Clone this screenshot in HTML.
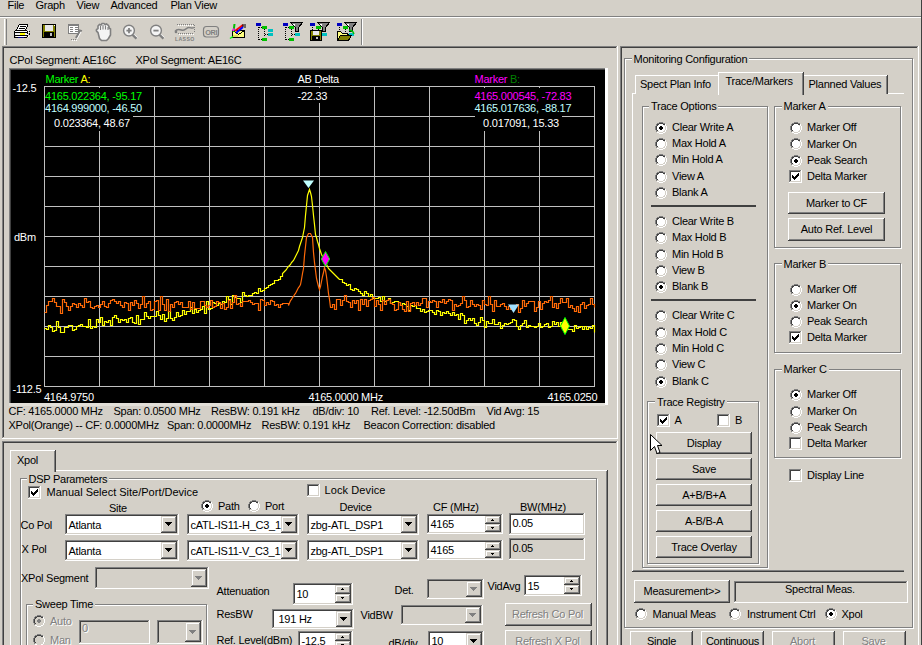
<!DOCTYPE html><html><head><meta charset="utf-8"><style>
html,body{margin:0;padding:0;}
body{width:922px;height:645px;overflow:hidden;position:relative;background:#d4d0c8;font-family:"Liberation Sans",sans-serif;font-size:11px;color:#000;}
.abs{position:absolute;box-sizing:border-box;}
.t{position:absolute;white-space:pre;line-height:13px;letter-spacing:-0.25px;}
.lbl{background:#d4d0c8;}
.btn{box-shadow:inset -1px -1px #404040,inset 1px 1px #fff,inset -2px -2px #808080,inset 2px 2px #d4d0c8;background:#d4d0c8;}
.cbtn{box-shadow:inset -1px -1px #404040,inset 1px 1px #d4d0c8,inset -2px -2px #808080,inset 2px 2px #fff;background:#d4d0c8;}
.sunk{box-shadow:inset -1px -1px #fff,inset 1px 1px #808080,inset -2px -2px #d4d0c8,inset 2px 2px #404040;}
.grp{border:1px solid #808080;box-shadow:1px 1px 0 #fff, inset 1px 1px 0 #fff;}
.g{color:#00ff00}.y{color:#ffff00}.c{color:#c0ffff}.m{color:#ff00ff}.w{color:#fff}.dg{color:#008000}
</style></head><body>
<div class="t " style="left:7.5px;top:-1.1px;">File</div>
<div class="t " style="left:35.5px;top:-1.1px;">Graph</div>
<div class="t " style="left:76.5px;top:-1.1px;">View</div>
<div class="t " style="left:110.5px;top:-1.1px;">Advanced</div>
<div class="t " style="left:170.5px;top:-1.1px;">Plan View</div>
<div class="abs" style="left:0px;top:16px;width:922px;height:1px;background:#808080"></div>
<div class="abs" style="left:0px;top:17px;width:922px;height:1px;background:#fff"></div>
<svg class="abs" style="left:0;top:0" width="400" height="46" shape-rendering="crispEdges"><rect x="19" y="24" width="9" height="1" fill="#000"/><rect x="18" y="25" width="1" height="2" fill="#000"/><rect x="27" y="25" width="1" height="2" fill="#000"/><rect x="19" y="25" width="8" height="2" fill="#fff"/><rect x="17" y="27" width="1" height="2" fill="#000"/><rect x="26" y="27" width="1" height="2" fill="#000"/><rect x="18" y="27" width="8" height="2" fill="#fff"/><rect x="20" y="26" width="6" height="1" fill="#000"/><rect x="19" y="28" width="6" height="1" fill="#000"/><rect x="16" y="29" width="1" height="1" fill="#000"/><rect x="17" y="29" width="9" height="1" fill="#fff"/><rect x="25" y="29" width="1" height="1" fill="#000"/><rect x="15" y="30" width="12" height="1" fill="#000"/><rect x="14" y="31" width="1" height="7" fill="#000"/><rect x="27" y="31" width="1" height="6" fill="#000"/><rect x="15" y="31" width="12" height="1" fill="#fff"/><rect x="15" y="32" width="12" height="1" fill="#000"/><rect x="15" y="33" width="12" height="2" fill="#f0f0f0"/><rect x="20" y="33" width="5" height="2" fill="#ffff00"/><rect x="15" y="35" width="12" height="1" fill="#000"/><rect x="16" y="36" width="10" height="1" fill="#fff"/><rect x="15" y="37" width="12" height="1" fill="#000"/><rect x="18" y="37" width="6" height="1" fill="#000080"/><rect x="28" y="30" width="1" height="1" fill="#fff"/><rect x="28" y="32" width="1" height="1" fill="#fff"/><rect x="27" y="34" width="1" height="1" fill="#fff"/><rect x="28" y="36" width="1" height="1" fill="#fff"/><rect x="29" y="31" width="1" height="1" fill="#000"/><rect x="29" y="33" width="1" height="2" fill="#000"/><rect x="42" y="24" width="14" height="14" fill="#000"/><rect x="43" y="25" width="12" height="12" fill="#808000"/><rect x="45" y="25" width="8" height="6" fill="#e8e8e8"/><rect x="44" y="32" width="10" height="5" fill="#000"/><rect x="50" y="33" width="2" height="3" fill="#c0c0c0"/><rect x="54" y="25" width="1" height="1" fill="#fff"/><path d="M68.5 24.5h10v9h-10z" fill="#fff" stroke="#808080" stroke-width="1" /><rect x="68" y="24" width="11" height="2" fill="#808080"/><rect x="70" y="27" width="3" height="1" fill="#808080"/><rect x="75" y="27" width="3" height="1" fill="#808080"/><rect x="70" y="29" width="3" height="1" fill="#808080"/><rect x="75" y="29" width="3" height="1" fill="#808080"/><rect x="70" y="31" width="3" height="1" fill="#808080"/><rect x="75" y="31" width="3" height="1" fill="#808080"/><g shape-rendering="auto"><path d="M80 31l-4 7" fill="none" stroke="#808080" stroke-width="2.2" /><path d="M81 32l-4 7" fill="none" stroke="#fff" stroke-width="1" /><path d="M79 30l3 1" fill="none" stroke="#808080" stroke-width="1.5" /></g><rect x="71" y="39" width="1" height="1" fill="#808080"/><rect x="73" y="39" width="1" height="1" fill="#808080"/><rect x="75" y="39" width="1" height="1" fill="#808080"/><rect x="72" y="40" width="1" height="1" fill="#fff"/><rect x="74" y="40" width="1" height="1" fill="#fff"/><rect x="76" y="40" width="1" height="1" fill="#fff"/><g shape-rendering="auto"><path d="M98 32.5c-1.5 -1 -2 -2 -1.5 -3l1.5 -1v-2.5l1.5 -1.5l1.5 0.5l1 -1.5h2l1 1l1.5 -0.5l1.5 1l1 1.5v1.5l1.5 1v6l-2 3.5l-2 2h-5l-2 -2z" fill="#f4f4f4" stroke="#808080" stroke-width="1.6" /><path d="M100.5 26v4M103 25v4.5M105.5 25.5v4M108 27v3" fill="none" stroke="#808080" stroke-width="1.1" /></g><g shape-rendering="auto"><circle cx="129" cy="30.6" r="5.4" fill="#f4f4f4" stroke="#808080" stroke-width="1.4"/><path d="M132.6 34.4l4 4" stroke="#808080" stroke-width="2.8"/><path d="M134 34.2l3.5 3.5" stroke="#fff" stroke-width="1"/><path d="M126.4 30.6h5.2" stroke="#808080" stroke-width="1.8"/><path d="M129 28v5.2" stroke="#808080" stroke-width="1.8"/><circle cx="156" cy="30.6" r="5.4" fill="#f4f4f4" stroke="#808080" stroke-width="1.4"/><path d="M159.6 34.4l4 4" stroke="#808080" stroke-width="2.8"/><path d="M161 34.2l3.5 3.5" stroke="#fff" stroke-width="1"/><path d="M153.4 30.6h5.2" stroke="#808080" stroke-width="1.8"/></g><rect x="177" y="24" width="1" height="1" fill="#808080"/><rect x="178" y="25" width="1" height="1" fill="#fff"/><rect x="179" y="24" width="1" height="1" fill="#808080"/><rect x="180" y="25" width="1" height="1" fill="#fff"/><rect x="181" y="24" width="1" height="1" fill="#808080"/><rect x="182" y="25" width="1" height="1" fill="#fff"/><rect x="183" y="24" width="1" height="1" fill="#808080"/><rect x="184" y="25" width="1" height="1" fill="#fff"/><rect x="185" y="24" width="1" height="1" fill="#808080"/><rect x="186" y="25" width="1" height="1" fill="#fff"/><rect x="187" y="24" width="1" height="1" fill="#808080"/><rect x="188" y="25" width="1" height="1" fill="#fff"/><rect x="189" y="24" width="1" height="1" fill="#808080"/><rect x="190" y="25" width="1" height="1" fill="#fff"/><rect x="191" y="24" width="1" height="1" fill="#808080"/><rect x="192" y="25" width="1" height="1" fill="#fff"/><rect x="193" y="24" width="1" height="1" fill="#808080"/><rect x="194" y="25" width="1" height="1" fill="#fff"/><rect x="194" y="25" width="1" height="1" fill="#808080"/><rect x="194" y="27" width="1" height="1" fill="#808080"/><rect x="194" y="29" width="1" height="1" fill="#808080"/><rect x="194" y="31" width="1" height="1" fill="#808080"/><rect x="178" y="33" width="1" height="1" fill="#808080"/><rect x="179" y="34" width="1" height="1" fill="#fff"/><rect x="180" y="33" width="1" height="1" fill="#808080"/><rect x="181" y="34" width="1" height="1" fill="#fff"/><rect x="182" y="33" width="1" height="1" fill="#808080"/><rect x="183" y="34" width="1" height="1" fill="#fff"/><rect x="184" y="33" width="1" height="1" fill="#808080"/><rect x="185" y="34" width="1" height="1" fill="#fff"/><rect x="186" y="33" width="1" height="1" fill="#808080"/><rect x="187" y="34" width="1" height="1" fill="#fff"/><rect x="188" y="33" width="1" height="1" fill="#808080"/><rect x="189" y="34" width="1" height="1" fill="#fff"/><rect x="190" y="33" width="1" height="1" fill="#808080"/><rect x="191" y="34" width="1" height="1" fill="#fff"/><rect x="192" y="33" width="1" height="1" fill="#808080"/><rect x="193" y="34" width="1" height="1" fill="#fff"/><g shape-rendering="auto"><path d="M175 31.5c2 -3 4 -2.5 6.5 -1.5c3 1.2 5 -2.5 7.5 -2.5c2 0 3 1.5 5 0" stroke="#808080" stroke-width="1.5" fill="none"/><circle cx="176" cy="32" r="1.3" fill="#808080"/><text x="175" y="40.5" font-family="Liberation Sans" font-size="5.2" font-weight="bold" fill="#808080" letter-spacing="0.35">LASSO</text><rect x="203.5" y="26.5" width="15" height="10.5" rx="3" fill="none" stroke="#808080" stroke-width="1.2"/><text x="205.2" y="34.6" font-family="Liberation Sans" font-size="7" font-weight="bold" fill="#808080" letter-spacing="-0.3" textLength="12" lengthAdjust="spacingAndGlyphs">ORI</text></g><path d="M232.5 30.5h12v7h-12z" fill="#ffff80" stroke="#000" stroke-width="1" /><path d="M232.5 30.5l6 4l6 -4" fill="none" stroke="#000" stroke-width="1" /><rect x="233" y="35" width="5" height="2" fill="#e0e060"/><g shape-rendering="auto"><path d="M235 31l8 -6" fill="none" stroke="#ff0000" stroke-width="2" /><path d="M236 33l7 -6" fill="none" stroke="#0000ff" stroke-width="2" /><path d="M233.5 32l1 -8" fill="none" stroke="#00c000" stroke-width="2" /><path d="M233 31l1 -2.5" fill="none" stroke="#ff00ff" stroke-width="2" /><path d="M243 24v3M245 24v4" fill="none" stroke="#000" stroke-width="1" /><path d="M230 38.5l3 -2" fill="none" stroke="#00ff00" stroke-width="1.5" /></g><rect x="256" y="23" width="5" height="3" fill="#0000c0"/><rect x="258" y="27" width="1" height="1" fill="#000"/><rect x="258" y="29" width="1" height="1" fill="#000"/><rect x="258" y="31" width="1" height="1" fill="#000"/><rect x="258" y="33" width="1" height="1" fill="#000"/><rect x="258" y="35" width="1" height="1" fill="#000"/><rect x="258" y="37" width="1" height="1" fill="#000"/><rect x="258" y="39" width="1" height="1" fill="#000"/><rect x="259" y="27" width="1" height="1" fill="#000"/><rect x="261" y="27" width="1" height="1" fill="#000"/><rect x="259" y="39" width="1" height="1" fill="#000"/><rect x="261" y="39" width="1" height="1" fill="#000"/><rect x="262" y="26" width="5" height="3" fill="#00c000"/><rect x="262" y="38" width="5" height="3" fill="#00c000"/><rect x="264" y="29" width="1" height="1" fill="#000"/><rect x="264" y="31" width="1" height="1" fill="#000"/><rect x="264" y="33" width="1" height="1" fill="#000"/><rect x="264" y="35" width="1" height="1" fill="#000"/><rect x="268" y="29" width="5" height="3" fill="#00c0c0"/><rect x="268" y="33" width="5" height="3" fill="#00c0c0"/><rect x="265" y="34" width="1" height="1" fill="#000"/><rect x="267" y="34" width="1" height="1" fill="#000"/><rect x="283" y="23" width="5" height="3" fill="#0000c0"/><rect x="285" y="27" width="1" height="1" fill="#000"/><rect x="285" y="29" width="1" height="1" fill="#000"/><rect x="285" y="31" width="1" height="1" fill="#000"/><rect x="285" y="33" width="1" height="1" fill="#000"/><rect x="285" y="35" width="1" height="1" fill="#000"/><rect x="285" y="37" width="1" height="1" fill="#000"/><rect x="285" y="39" width="1" height="1" fill="#000"/><rect x="286" y="27" width="1" height="1" fill="#000"/><rect x="288" y="27" width="1" height="1" fill="#000"/><rect x="286" y="39" width="1" height="1" fill="#000"/><rect x="288" y="39" width="1" height="1" fill="#000"/><rect x="289" y="26" width="5" height="3" fill="#00c000"/><rect x="289" y="38" width="5" height="3" fill="#00c000"/><rect x="291" y="29" width="1" height="1" fill="#000"/><rect x="291" y="31" width="1" height="1" fill="#000"/><rect x="291" y="33" width="1" height="1" fill="#000"/><rect x="291" y="35" width="1" height="1" fill="#000"/><rect x="295" y="33" width="5" height="3" fill="#00c0c0"/><rect x="292" y="34" width="1" height="1" fill="#000"/><rect x="294" y="34" width="1" height="1" fill="#000"/><path d="M290.5 22.5h12l-4 5v4h-3v-4z" fill="#808080" stroke="#000" stroke-width="1" /><path d="M292 23.5h4l-1.5 2.5z" fill="#fff" stroke="none" stroke-width="1" /><rect x="310" y="23" width="5" height="3" fill="#0000c0"/><rect x="312" y="27" width="1" height="1" fill="#000"/><rect x="312" y="29" width="1" height="1" fill="#000"/><rect x="312" y="31" width="1" height="1" fill="#000"/><rect x="312" y="33" width="1" height="1" fill="#000"/><rect x="312" y="35" width="1" height="1" fill="#000"/><rect x="312" y="37" width="1" height="1" fill="#000"/><rect x="312" y="39" width="1" height="1" fill="#000"/><rect x="316" y="26" width="5" height="3" fill="#00c000"/><rect x="318" y="29" width="1" height="1" fill="#000"/><rect x="318" y="31" width="1" height="1" fill="#000"/><rect x="318" y="33" width="1" height="1" fill="#000"/><rect x="318" y="35" width="1" height="1" fill="#000"/><rect x="322" y="33" width="5" height="3" fill="#00c0c0"/><rect x="319" y="34" width="1" height="1" fill="#000"/><rect x="321" y="34" width="1" height="1" fill="#000"/><path d="M317.5 22.5h12l-4 5v4h-3v-4z" fill="#808080" stroke="#000" stroke-width="1" /><path d="M319 23.5h4l-1.5 2.5z" fill="#fff" stroke="none" stroke-width="1" /><rect x="310" y="30" width="12" height="11" fill="#000"/><rect x="311" y="31" width="10" height="9" fill="#808000"/><rect x="313" y="31" width="6" height="4" fill="#e8e8e8"/><rect x="312" y="36" width="8" height="4" fill="#000"/><rect x="316" y="37" width="2" height="2" fill="#c0c0c0"/><rect x="337" y="23" width="5" height="3" fill="#0000c0"/><rect x="339" y="27" width="1" height="1" fill="#000"/><rect x="339" y="29" width="1" height="1" fill="#000"/><rect x="339" y="31" width="1" height="1" fill="#000"/><rect x="339" y="33" width="1" height="1" fill="#000"/><rect x="339" y="35" width="1" height="1" fill="#000"/><rect x="339" y="37" width="1" height="1" fill="#000"/><rect x="339" y="39" width="1" height="1" fill="#000"/><rect x="343" y="26" width="5" height="3" fill="#00c000"/><rect x="345" y="29" width="1" height="1" fill="#000"/><rect x="345" y="31" width="1" height="1" fill="#000"/><rect x="345" y="33" width="1" height="1" fill="#000"/><rect x="345" y="35" width="1" height="1" fill="#000"/><rect x="349" y="33" width="5" height="3" fill="#00c0c0"/><rect x="346" y="34" width="1" height="1" fill="#000"/><rect x="348" y="34" width="1" height="1" fill="#000"/><path d="M344.5 22.5h12l-4 5v4h-3v-4z" fill="#808080" stroke="#000" stroke-width="1" /><path d="M346 23.5h4l-1.5 2.5z" fill="#fff" stroke="none" stroke-width="1" /><path d="M337.5 31.5h3l2 2h5v7h-10z" fill="#ffff80" stroke="#000" stroke-width="1" /><path d="M337.5 40.5l3 -5h11l-3 5z" fill="#808000" stroke="#000" stroke-width="1" /><path d="M349 30l3 1l1 1l1 2" stroke="#00c000" stroke-width="1.5" fill="none" shape-rendering="auto"/></svg>
<div class="abs" style="left:4px;top:19px;width:1px;height:26px;background:#fff"></div>
<div class="abs" style="left:6px;top:19px;width:1px;height:26px;background:#808080"></div>
<div class="abs" style="left:361px;top:19px;width:1px;height:26px;background:#808080"></div>
<div class="abs" style="left:362px;top:19px;width:1px;height:26px;background:#fff"></div>
<div class="abs" style="left:0px;top:45px;width:922px;height:1px;background:#d4d0c8"></div>
<div class="abs" style="left:2px;top:46px;width:616px;height:393px;"></div>
<div class="abs" style="left:2px;top:46px;width:616px;height:393px;box-shadow:inset -1px -1px #fff,inset 1px 1px #808080,inset -2px -2px #d4d0c8,inset 2px 2px #404040;"></div>
<div class="t " style="left:9.5px;top:53.7px;">CPol Segment: AE16C</div>
<div class="t " style="left:135.5px;top:53.7px;">XPol Segment: AE16C</div>
<div class="abs" style="left:9px;top:68px;width:599px;height:337px;box-shadow:inset 1px 1px #808080,inset 2px 2px #404040;"></div>
<div class="abs" style="left:605px;top:68px;width:3px;height:337px;background:#fff"></div>
<div class="abs" style="left:9px;top:403px;width:596px;height:3px;background:#e2dfd8"></div>
<div class="abs" style="left:11px;top:70px;width:594px;height:333px;background:#000"></div>
<svg class="abs" style="left:0;top:0" width="922" height="645"><path d="M44.5 86V387M44 86.5H595M99.5 86V387M44 116.5H595M154.5 86V387M44 146.5H595M209.5 86V387M44 176.5H595M264.5 86V387M44 206.5H595M319.5 86V387M44 236.5H595M374.5 86V387M44 266.5H595M429.5 86V387M44 296.5H595M484.5 86V387M44 326.5H595M539.5 86V387M44 356.5H595M594.5 86V387M44 386.5H595" stroke="#c0c0c0" stroke-width="1" fill="none"/><path d="M44.5 328.5H46.5V329.5H48.5V325.5H50.5V327.5H52.5V331.5H54.5V330.5H56.5V321.5H58.5V327.5H60.5V332.5H62.5V332.5H64.5V327.5H66.5V327.5H68.5V325.5H70.5V325.5H72.5V330.5H74.5V329.5H76.5V326.5H78.5V325.5H80.5V324.5H82.5V326.5H84.5V326.5H86.5V327.5H88.5V319.5H90.5V328.5H92.5V326.5H94.5V327.5H96.5V319.5H98.5V322.5H100.5V317.5H102.5V325.5H104.5V321.5H106.5V322.5H108.5V320.5H110.5V325.5H112.5V317.5H114.5V315.5H116.5V318.5H118.5V322.5H120.5V319.5H122.5V320.5H124.5V319.5H126.5V322.5H128.5V318.5H130.5V317.5H132.5V322.5H134.5V323.5H136.5V315.5H138.5V324.5H140.5V319.5H142.5V319.5H144.5V312.5H146.5V316.5H148.5V318.5H150.5V316.5H152.5V316.5H154.5V316.5H156.5V311.5H158.5V315.5H160.5V319.5H162.5V314.5H164.5V321.5H166.5V318.5H168.5V311.5H170.5V318.5H172.5V320.5H174.5V317.5H176.5V312.5H178.5V316.5H180.5V315.5H182.5V310.5H184.5V314.5H186.5V311.5H188.5V311.5H190.5V307.5H192.5V313.5H194.5V309.5H196.5V312.5H198.5V310.5H200.5V309.5H202.5V306.5H204.5V313.5H206.5V301.5H208.5V309.5H210.5V308.5H212.5V302.5H214.5V303.5H216.5V305.5H218.5V303.5H220.5V304.5H222.5V301.5H224.5V302.5H226.5V296.5H228.5V299.5H230.5V304.5H232.5V295.5H234.5V297.5H236.5V298.5H238.5V298.5H240.5V302.5H242.5V292.5H244.5V295.5H246.5V296.5H248.5V295.5H250.5V295.5H252.5V293.5H254.5V292.5H256.5V293.5H258.5V288.5H260.5V291.5H262.5V290.5H264.5V288.5H266.5V287.5H268.5V285.5H270.5V284.5H272.5V283.5H274.5V280.5H276.5V280.5H278.5V279.5H280.5V276.5H282.5V273.5L284.5 271.5L285.5 270.5L286.5 269.5L287.5 267.5L288.5 266.5L289.5 265.5L290.5 264.5L291.5 262.5L292.5 261.5L293.5 260.5L294.5 258.5L295.5 256.5L296.5 254.5L297.5 252.5L298.5 250.5L299.5 246.5L300.5 243.5L301.5 240.5L302.5 237.5L303.5 232.5L304.5 227.5L305.5 215.5L306.5 205.5L307.5 195.5L308.5 192.5L309.5 189.5L310.5 192.5L311.5 196.5L312.5 205.5L313.5 215.5L314.5 224.5L315.5 234.5L316.5 237.5L317.5 241.5L318.5 244.5L319.5 248.5L320.5 251.5L321.5 254.5L322.5 256.5L323.5 258.5L324.5 260.5L325.5 262.5L326.5 264.5L327.5 266.5L328.5 268.5L329.5 269.5L330.5 270.5L331.5 271.5L332.5 272.5L333.5 273.5L334.5 274.5L335.5 275.5L336.5 276.5L337.5 277.5L338.5 278.5L339.5 279.5L340.5 279.5H342.5V282.5H344.5V283.5H346.5V285.5H348.5V284.5H350.5V289.5H352.5V290.5H354.5V288.5H356.5V289.5H358.5V291.5H360.5V293.5H362.5V295.5H364.5V291.5H366.5V293.5H368.5V296.5H370.5V294.5H372.5V298.5H374.5V298.5H376.5V298.5H378.5V297.5H380.5V301.5H382.5V296.5H384.5V301.5H386.5V300.5H388.5V298.5H390.5V303.5H392.5V302.5H394.5V301.5H396.5V301.5H398.5V302.5H400.5V305.5H402.5V303.5H404.5V304.5H406.5V306.5H408.5V310.5H410.5V305.5H412.5V306.5H414.5V305.5H416.5V308.5H418.5V308.5H420.5V311.5H422.5V309.5H424.5V312.5H426.5V311.5H428.5V310.5H430.5V310.5H432.5V312.5H434.5V314.5H436.5V310.5H438.5V311.5H440.5V315.5H442.5V312.5H444.5V313.5H446.5V311.5H448.5V313.5H450.5V315.5H452.5V312.5H454.5V315.5H456.5V314.5H458.5V319.5H460.5V313.5H462.5V315.5H464.5V323.5H466.5V320.5H468.5V318.5H470.5V320.5H472.5V318.5H474.5V323.5H476.5V325.5H478.5V322.5H480.5V317.5H482.5V320.5H484.5V327.5H486.5V321.5H488.5V323.5H490.5V323.5H492.5V319.5H494.5V324.5H496.5V324.5H498.5V322.5H500.5V328.5H502.5V325.5H504.5V323.5H506.5V324.5H508.5V323.5H510.5V322.5H512.5V319.5H514.5V320.5H516.5V326.5H518.5V329.5H520.5V325.5H522.5V323.5H524.5V320.5H526.5V327.5H528.5V325.5H530.5V326.5H532.5V326.5H534.5V327.5H536.5V326.5H538.5V323.5H540.5V327.5H542.5V326.5H544.5V324.5H546.5V323.5H548.5V327.5H550.5V326.5H552.5V321.5H554.5V324.5H556.5V322.5H558.5V326.5H560.5V322.5H562.5V329.5H564.5V328.5H566.5V329.5H568.5V329.5H570.5V329.5H572.5V331.5H574.5V325.5H576.5V328.5H578.5V327.5H580.5V326.5H582.5V329.5H584.5V326.5H586.5V329.5H588.5V327.5H590.5V328.5H592.5V325.5H594.5V332.5" stroke="#ffff00" stroke-width="1.2" fill="none"/><path d="M44.5 312.5H46.5V305.5H48.5V301.5H50.5V301.5H52.5V298.5H54.5V302.5H56.5V306.5H58.5V306.5H60.5V313.5H62.5V299.5H64.5V302.5H66.5V306.5H68.5V310.5H70.5V306.5H72.5V303.5H74.5V304.5H76.5V307.5H78.5V303.5H80.5V305.5H82.5V307.5H84.5V298.5H86.5V302.5H88.5V301.5H90.5V307.5H92.5V308.5H94.5V306.5H96.5V305.5H98.5V307.5H100.5V304.5H102.5V301.5H104.5V306.5H106.5V307.5H108.5V303.5H110.5V300.5H112.5V299.5H114.5V301.5H116.5V303.5H118.5V301.5H120.5V305.5H122.5V307.5H124.5V302.5H126.5V303.5H128.5V310.5H130.5V302.5H132.5V305.5H134.5V300.5H136.5V303.5H138.5V308.5H140.5V304.5H142.5V296.5H144.5V307.5H146.5V303.5H148.5V301.5H150.5V310.5H152.5V309.5H154.5V301.5H156.5V300.5H158.5V310.5H160.5V296.5H162.5V304.5H164.5V310.5H166.5V299.5H168.5V311.5H170.5V304.5H172.5V307.5H174.5V302.5H176.5V301.5H178.5V304.5H180.5V302.5H182.5V307.5H184.5V307.5H186.5V307.5H188.5V301.5H190.5V309.5H192.5V302.5H194.5V308.5H196.5V308.5H198.5V308.5H200.5V301.5H202.5V301.5H204.5V305.5H206.5V307.5H208.5V305.5H210.5V300.5H212.5V307.5H214.5V306.5H216.5V301.5H218.5V302.5H220.5V308.5H222.5V303.5H224.5V309.5H226.5V307.5H228.5V300.5H230.5V308.5H232.5V302.5H234.5V295.5H236.5V304.5H238.5V303.5H240.5V306.5H242.5V301.5H244.5V301.5H246.5V301.5H248.5V300.5H250.5V302.5H252.5V304.5H254.5V303.5H256.5V303.5H258.5V310.5H260.5V299.5H262.5V300.5H264.5V305.5H266.5V302.5H268.5V304.5H270.5V300.5H272.5V301.5H274.5V305.5H276.5V304.5H278.5V307.5H280.5V304.5H282.5V303.5H284.5V303.5H286.5V303.5H288.5V305.5L290.5 300.5L291.5 299.5L292.5 297.5L293.5 296.5L294.5 294.5L295.5 293.5L296.5 291.5L297.5 289.5L298.5 287.5L299.5 286.5L300.5 284.5L301.5 279.5L302.5 273.5L303.5 268.5L304.5 255.5L305.5 246.5L306.5 237.5L307.5 235.5L308.5 233.5L309.5 233.5L310.5 233.5L311.5 235.5L312.5 237.5L313.5 252.5L314.5 262.5L315.5 270.5L316.5 278.5L317.5 282.5L318.5 286.5L319.5 289.5L320.5 286.5L321.5 281.5L322.5 276.5L323.5 272.5L324.5 267.5L325.5 270.5L326.5 276.5L327.5 284.5L328.5 293.5L329.5 299.5L330.5 307.5H332.5V304.5H334.5V309.5H336.5V299.5H338.5V299.5H340.5V305.5H342.5V300.5H344.5V295.5H346.5V301.5H348.5V302.5H350.5V307.5H352.5V300.5H354.5V303.5H356.5V300.5H358.5V310.5H360.5V299.5H362.5V304.5H364.5V299.5H366.5V306.5H368.5V300.5H370.5V299.5H372.5V297.5H374.5V306.5H376.5V300.5H378.5V304.5H380.5V310.5H382.5V300.5H384.5V304.5H386.5V300.5H388.5V299.5H390.5V303.5H392.5V304.5H394.5V310.5H396.5V309.5H398.5V302.5H400.5V305.5H402.5V309.5H404.5V311.5H406.5V301.5H408.5V311.5H410.5V303.5H412.5V302.5H414.5V305.5H416.5V302.5H418.5V305.5H420.5V303.5H422.5V298.5H424.5V298.5H426.5V307.5H428.5V301.5H430.5V302.5H432.5V300.5H434.5V301.5H436.5V307.5H438.5V301.5H440.5V302.5H442.5V299.5H444.5V303.5H446.5V301.5H448.5V299.5H450.5V300.5H452.5V310.5H454.5V304.5H456.5V306.5H458.5V305.5H460.5V303.5H462.5V296.5H464.5V300.5H466.5V307.5H468.5V306.5H470.5V300.5H472.5V304.5H474.5V306.5H476.5V304.5H478.5V305.5H480.5V309.5H482.5V300.5H484.5V304.5H486.5V305.5H488.5V296.5H490.5V304.5H492.5V311.5H494.5V300.5H496.5V306.5H498.5V306.5H500.5V304.5H502.5V303.5H504.5V306.5H506.5V309.5H508.5V306.5H510.5V309.5H512.5V305.5H514.5V305.5H516.5V304.5H518.5V312.5H520.5V308.5H522.5V300.5H524.5V306.5H526.5V303.5H528.5V301.5H530.5V301.5H532.5V301.5H534.5V311.5H536.5V307.5H538.5V301.5H540.5V309.5H542.5V303.5H544.5V301.5H546.5V302.5H548.5V300.5H550.5V296.5H552.5V307.5H554.5V303.5H556.5V308.5H558.5V303.5H560.5V298.5H562.5V302.5H564.5V302.5H566.5V298.5H568.5V307.5H570.5V305.5H572.5V308.5H574.5V311.5H576.5V306.5H578.5V312.5H580.5V304.5H582.5V302.5H584.5V308.5H586.5V305.5H588.5V304.5H590.5V298.5H592.5V304.5H594.5V307.5" stroke="#ff6a08" stroke-width="1.2" fill="none"/><rect x="45" y="88" width="100" height="14" fill="#000"/><rect x="45" y="102" width="100" height="14" fill="#000"/><rect x="45" y="116" width="88" height="15" fill="#000"/><rect x="296" y="88" width="34" height="15" fill="#000"/><rect x="475" y="88" width="100" height="14" fill="#000"/><rect x="475" y="102" width="100" height="14" fill="#000"/><rect x="475" y="116" width="87" height="15" fill="#000"/><path d="M303 180.5h11l-5.5 7.5z" fill="#c0ffff"/><path d="M508 304.5h11l-5.5 8.5z" fill="#a0e0ff"/><path d="M325.5 251.5l4.2 7.5l-4.2 7.5l-4.2 -7.5z" fill="#ff00ff" stroke="#00ff00" stroke-width="1"/><path d="M565 317.5l4.5 8.5l-4.5 8.5l-4.5 -8.5z" fill="#ffff00" stroke="#00ff00" stroke-width="1"/></svg><div class="t w" style="left:12.5px;top:82.2px;">-12.5</div><div class="t w" style="left:14.0px;top:231.4px;">dBm</div><div class="t w" style="left:12.5px;top:382.7px;">-112.5</div><div class="t w" style="left:44.0px;top:391.2px;">4164.9750</div><div class="t w" style="left:308.5px;top:391.2px;">4165.0000 MHz</div><div class="t w" style="left:547.5px;top:391.2px;">4165.0250</div><div class="t " style="left:45.5px;top:73.2px;"><span class="g">Marker </span><span class="y">A:</span></div><div class="t g" style="left:45.1px;top:89.7px;">4165.022364, -95.17</div><div class="t c" style="left:45.1px;top:102.2px;">4164.999000, -46.50</div><div class="t w" style="left:54.1px;top:117.2px;">0.023364, 48.67</div><div class="t w" style="left:297.5px;top:73.2px;">AB Delta</div><div class="t w" style="left:297.5px;top:90.2px;">-22.33</div><div class="t " style="left:474.5px;top:73.2px;"><span class="m">Marker </span><span class="dg">B:</span></div><div class="t m" style="left:474.5px;top:89.7px;">4165.000545, -72.83</div><div class="t c" style="left:474.5px;top:102.2px;">4165.017636, -88.17</div><div class="t w" style="left:483.1px;top:117.2px;">0.017091, 15.33</div>
<div class="t " style="left:8.5px;top:404.7px;">CF: 4165.0000 MHz</div>
<div class="t " style="left:113.5px;top:404.7px;">Span: 0.0500 MHz</div>
<div class="t " style="left:211.0px;top:404.7px;">ResBW: 0.191 kHz</div>
<div class="t " style="left:312.5px;top:404.7px;">dB/div: 10</div>
<div class="t " style="left:371.0px;top:404.7px;">Ref. Level: -12.50dBm</div>
<div class="t " style="left:486.5px;top:404.7px;">Vid Avg: 15</div>
<div class="t " style="left:8.5px;top:418.7px;">XPol(Orange) -- CF: 0.0000MHz</div>
<div class="t " style="left:167.0px;top:418.7px;">Span: 0.0000MHz</div>
<div class="t " style="left:261.5px;top:418.7px;">ResBW: 0.191 kHz</div>
<div class="t " style="left:363.5px;top:418.7px;">Beacon Correction: disabled</div>
<div class="abs" style="left:2px;top:441px;width:616px;height:220px;box-shadow:inset -1px -1px #fff,inset 1px 1px #808080,inset -2px -2px #d4d0c8,inset 2px 2px #404040;"></div>
<div class="abs" style="left:10px;top:470px;width:598px;height:200px;box-shadow:inset -1px -1px #404040,inset 1px 1px #fff,inset -2px -2px #808080;"></div>
<div class="abs" style="left:10px;top:450px;width:46px;height:22px;background:#d4d0c8;box-shadow:inset -1px 0 #404040,inset 1px 1px #fff,inset -2px 0 #808080;"></div>
<div class="t " style="left:17.0px;top:453.7px;">Xpol</div>
<div class="abs grp" style="left:20px;top:478px;width:577px;height:200px;"></div>
<div class="t lbl" style="left:26.5px;top:472.7px;padding:0 2px">DSP Parameters</div>
<svg class="abs" style="left:28px;top:486px" width="13" height="13" shape-rendering="crispEdges"><rect x="0" y="0" width="13" height="13" fill="#fff"/><rect x="0" y="0" width="12" height="1" fill="#808080"/><rect x="0" y="0" width="1" height="12" fill="#808080"/><rect x="1" y="1" width="10" height="1" fill="#404040"/><rect x="1" y="1" width="1" height="10" fill="#404040"/><rect x="1" y="11" width="11" height="1" fill="#d4d0c8"/><rect x="11" y="1" width="1" height="11" fill="#d4d0c8"/><rect x="0" y="12" width="13" height="1" fill="#fff"/><rect x="12" y="0" width="1" height="13" fill="#fff"/><rect x="9" y="3" width="1" height="1" fill="#000"/><rect x="8" y="4" width="1" height="1" fill="#000"/><rect x="9" y="4" width="1" height="1" fill="#000"/><rect x="7" y="5" width="1" height="1" fill="#000"/><rect x="8" y="5" width="1" height="1" fill="#000"/><rect x="9" y="5" width="1" height="1" fill="#000"/><rect x="3" y="5" width="1" height="1" fill="#000"/><rect x="3" y="6" width="1" height="1" fill="#000"/><rect x="4" y="6" width="1" height="1" fill="#000"/><rect x="6" y="6" width="1" height="1" fill="#000"/><rect x="7" y="6" width="1" height="1" fill="#000"/><rect x="8" y="6" width="1" height="1" fill="#000"/><rect x="3" y="7" width="1" height="1" fill="#000"/><rect x="4" y="7" width="1" height="1" fill="#000"/><rect x="5" y="7" width="1" height="1" fill="#000"/><rect x="6" y="7" width="1" height="1" fill="#000"/><rect x="7" y="7" width="1" height="1" fill="#000"/><rect x="4" y="8" width="1" height="1" fill="#000"/><rect x="5" y="8" width="1" height="1" fill="#000"/><rect x="6" y="8" width="1" height="1" fill="#000"/><rect x="5" y="9" width="1" height="1" fill="#000"/></svg>
<div class="t " style="left:46.5px;top:485.7px;letter-spacing:0">Manual Select Site/Port/Device</div>
<svg class="abs" style="left:307px;top:484px" width="13" height="13" shape-rendering="crispEdges"><rect x="0" y="0" width="13" height="13" fill="#fff"/><rect x="0" y="0" width="12" height="1" fill="#808080"/><rect x="0" y="0" width="1" height="12" fill="#808080"/><rect x="1" y="1" width="10" height="1" fill="#404040"/><rect x="1" y="1" width="1" height="10" fill="#404040"/><rect x="1" y="11" width="11" height="1" fill="#d4d0c8"/><rect x="11" y="1" width="1" height="11" fill="#d4d0c8"/><rect x="0" y="12" width="13" height="1" fill="#fff"/><rect x="12" y="0" width="1" height="13" fill="#fff"/></svg>
<div class="t " style="left:324.5px;top:483.7px;letter-spacing:0.1px">Lock Device</div>
<div class="t " style="left:109.0px;top:501.7px;">Site</div>
<svg class="abs" style="left:201px;top:500px" width="12" height="12" shape-rendering="crispEdges"><rect x="3" y="2" width="6" height="8" fill="#fff"/><rect x="2" y="3" width="8" height="6" fill="#fff"/><rect x="4" y="0" width="4" height="1" fill="#808080"/><rect x="2" y="1" width="2" height="1" fill="#808080"/><rect x="8" y="1" width="2" height="1" fill="#808080"/><rect x="1" y="2" width="1" height="2" fill="#808080"/><rect x="0" y="4" width="1" height="4" fill="#808080"/><rect x="1" y="8" width="1" height="2" fill="#808080"/><rect x="4" y="1" width="4" height="1" fill="#404040"/><rect x="2" y="2" width="2" height="1" fill="#404040"/><rect x="8" y="2" width="2" height="1" fill="#404040"/><rect x="2" y="3" width="1" height="1" fill="#404040"/><rect x="1" y="4" width="1" height="4" fill="#404040"/><rect x="2" y="8" width="1" height="1" fill="#404040"/><rect x="4" y="11" width="4" height="1" fill="#fff"/><rect x="2" y="10" width="2" height="1" fill="#fff"/><rect x="8" y="10" width="2" height="1" fill="#fff"/><rect x="10" y="8" width="1" height="2" fill="#fff"/><rect x="11" y="4" width="1" height="4" fill="#fff"/><rect x="10" y="2" width="1" height="2" fill="#fff"/><rect x="4" y="10" width="4" height="1" fill="#d4d0c8"/><rect x="2" y="9" width="2" height="1" fill="#d4d0c8"/><rect x="8" y="9" width="2" height="1" fill="#d4d0c8"/><rect x="9" y="8" width="1" height="1" fill="#d4d0c8"/><rect x="10" y="4" width="1" height="4" fill="#d4d0c8"/><rect x="9" y="3" width="1" height="1" fill="#d4d0c8"/><rect x="5" y="4" width="2" height="1" fill="#000"/><rect x="4" y="5" width="4" height="2" fill="#000"/><rect x="5" y="7" width="2" height="1" fill="#000"/></svg>
<div class="t " style="left:218.0px;top:499.7px;">Path</div>
<svg class="abs" style="left:248px;top:500px" width="12" height="12" shape-rendering="crispEdges"><rect x="3" y="2" width="6" height="8" fill="#fff"/><rect x="2" y="3" width="8" height="6" fill="#fff"/><rect x="4" y="0" width="4" height="1" fill="#808080"/><rect x="2" y="1" width="2" height="1" fill="#808080"/><rect x="8" y="1" width="2" height="1" fill="#808080"/><rect x="1" y="2" width="1" height="2" fill="#808080"/><rect x="0" y="4" width="1" height="4" fill="#808080"/><rect x="1" y="8" width="1" height="2" fill="#808080"/><rect x="4" y="1" width="4" height="1" fill="#404040"/><rect x="2" y="2" width="2" height="1" fill="#404040"/><rect x="8" y="2" width="2" height="1" fill="#404040"/><rect x="2" y="3" width="1" height="1" fill="#404040"/><rect x="1" y="4" width="1" height="4" fill="#404040"/><rect x="2" y="8" width="1" height="1" fill="#404040"/><rect x="4" y="11" width="4" height="1" fill="#fff"/><rect x="2" y="10" width="2" height="1" fill="#fff"/><rect x="8" y="10" width="2" height="1" fill="#fff"/><rect x="10" y="8" width="1" height="2" fill="#fff"/><rect x="11" y="4" width="1" height="4" fill="#fff"/><rect x="10" y="2" width="1" height="2" fill="#fff"/><rect x="4" y="10" width="4" height="1" fill="#d4d0c8"/><rect x="2" y="9" width="2" height="1" fill="#d4d0c8"/><rect x="8" y="9" width="2" height="1" fill="#d4d0c8"/><rect x="9" y="8" width="1" height="1" fill="#d4d0c8"/><rect x="10" y="4" width="1" height="4" fill="#d4d0c8"/><rect x="9" y="3" width="1" height="1" fill="#d4d0c8"/></svg>
<div class="t " style="left:265.0px;top:499.7px;">Port</div>
<div class="t " style="left:339.5px;top:500.7px;">Device</div>
<div class="t " style="left:433.0px;top:500.7px;">CF (MHz)</div>
<div class="t " style="left:520.0px;top:500.7px;">BW(MHz)</div>
<div class="t " style="left:20.5px;top:518.7px;">Co Pol</div>
<div class="t " style="left:21.5px;top:543.2px;">X Pol</div>
<div class="abs sunk" style="left:65px;top:514px;width:114px;height:21px;background:#fff"></div>
<div class="abs cbtn" style="left:161px;top:516px;width:16px;height:17px;"></div>
<svg class="abs" style="left:161px;top:516px" width="16" height="17" shape-rendering="crispEdges"><rect x="4" y="6" width="7" height="1" fill="#000"/><rect x="5" y="7" width="5" height="1" fill="#000"/><rect x="6" y="8" width="3" height="1" fill="#000"/><rect x="7" y="9" width="1" height="1" fill="#000"/></svg>
<div class="t " style="left:68.5px;top:518.7px;">Atlanta</div>
<div class="abs sunk" style="left:65px;top:540px;width:114px;height:21px;background:#fff"></div>
<div class="abs cbtn" style="left:161px;top:542px;width:16px;height:17px;"></div>
<svg class="abs" style="left:161px;top:542px" width="16" height="17" shape-rendering="crispEdges"><rect x="4" y="6" width="7" height="1" fill="#000"/><rect x="5" y="7" width="5" height="1" fill="#000"/><rect x="6" y="8" width="3" height="1" fill="#000"/><rect x="7" y="9" width="1" height="1" fill="#000"/></svg>
<div class="t " style="left:68.5px;top:544.7px;">Atlanta</div>
<div class="abs sunk" style="left:187px;top:514px;width:112px;height:21px;background:#fff"></div>
<div class="abs cbtn" style="left:281px;top:516px;width:16px;height:17px;"></div>
<svg class="abs" style="left:281px;top:516px" width="16" height="17" shape-rendering="crispEdges"><rect x="4" y="6" width="7" height="1" fill="#000"/><rect x="5" y="7" width="5" height="1" fill="#000"/><rect x="6" y="8" width="3" height="1" fill="#000"/><rect x="7" y="9" width="1" height="1" fill="#000"/></svg>
<div class="t " style="left:190.5px;top:518.7px;">cATL-IS11-H_C3_1</div>
<div class="abs sunk" style="left:187px;top:540px;width:112px;height:21px;background:#fff"></div>
<div class="abs cbtn" style="left:281px;top:542px;width:16px;height:17px;"></div>
<svg class="abs" style="left:281px;top:542px" width="16" height="17" shape-rendering="crispEdges"><rect x="4" y="6" width="7" height="1" fill="#000"/><rect x="5" y="7" width="5" height="1" fill="#000"/><rect x="6" y="8" width="3" height="1" fill="#000"/><rect x="7" y="9" width="1" height="1" fill="#000"/></svg>
<div class="t " style="left:190.5px;top:544.7px;">cATL-IS11-V_C3_1</div>
<div class="abs sunk" style="left:307px;top:514px;width:112px;height:21px;background:#fff"></div>
<div class="abs cbtn" style="left:401px;top:516px;width:16px;height:17px;"></div>
<svg class="abs" style="left:401px;top:516px" width="16" height="17" shape-rendering="crispEdges"><rect x="4" y="6" width="7" height="1" fill="#000"/><rect x="5" y="7" width="5" height="1" fill="#000"/><rect x="6" y="8" width="3" height="1" fill="#000"/><rect x="7" y="9" width="1" height="1" fill="#000"/></svg>
<div class="t " style="left:310.5px;top:518.7px;">zbg-ATL_DSP1</div>
<div class="abs sunk" style="left:307px;top:540px;width:112px;height:21px;background:#fff"></div>
<div class="abs cbtn" style="left:401px;top:542px;width:16px;height:17px;"></div>
<svg class="abs" style="left:401px;top:542px" width="16" height="17" shape-rendering="crispEdges"><rect x="4" y="6" width="7" height="1" fill="#000"/><rect x="5" y="7" width="5" height="1" fill="#000"/><rect x="6" y="8" width="3" height="1" fill="#000"/><rect x="7" y="9" width="1" height="1" fill="#000"/></svg>
<div class="t " style="left:310.5px;top:544.7px;">zbg-ATL_DSP1</div>
<div class="abs sunk" style="left:427px;top:514px;width:76px;height:20px;background:#fff"></div>
<div class="abs cbtn" style="left:485px;top:516px;width:16px;height:8px;"></div>
<div class="abs cbtn" style="left:485px;top:524px;width:16px;height:8px;"></div>
<svg class="abs" style="left:485px;top:516px" width="16" height="16" shape-rendering="crispEdges"><rect x="7" y="3" width="1" height="1" fill="#000"/><rect x="6" y="4" width="3" height="1" fill="#000"/><rect x="6" y="11" width="3" height="1" fill="#000"/><rect x="7" y="12" width="1" height="1" fill="#000"/></svg>
<div class="t " style="left:430.5px;top:518.2px;">4165</div>
<div class="abs sunk" style="left:427px;top:540px;width:76px;height:20px;background:#fff"></div>
<div class="abs cbtn" style="left:485px;top:542px;width:16px;height:8px;"></div>
<div class="abs cbtn" style="left:485px;top:550px;width:16px;height:8px;"></div>
<svg class="abs" style="left:485px;top:542px" width="16" height="16" shape-rendering="crispEdges"><rect x="7" y="3" width="1" height="1" fill="#000"/><rect x="6" y="4" width="3" height="1" fill="#000"/><rect x="6" y="11" width="3" height="1" fill="#000"/><rect x="7" y="12" width="1" height="1" fill="#000"/></svg>
<div class="t " style="left:430.5px;top:544.2px;">4165</div>
<div class="abs sunk" style="left:509px;top:513px;width:76px;height:22px;background:#fff"></div>
<div class="t " style="left:512.5px;top:516.7px;">0.05</div>
<div class="abs sunk" style="left:509px;top:538px;width:76px;height:22px;background:#d4d0c8"></div>
<div class="t " style="left:512.5px;top:541.7px;">0.05</div>
<div class="t " style="left:21.0px;top:571.7px;">XPol Segment</div>
<div class="abs sunk" style="left:95px;top:567px;width:114px;height:22px;background:#d4d0c8"></div>
<div class="abs cbtn" style="left:191px;top:569px;width:16px;height:18px;"></div>
<svg class="abs" style="left:191px;top:569px" width="16" height="18" shape-rendering="crispEdges"><rect x="4" y="7" width="7" height="1" fill="#808080"/><rect x="5" y="8" width="5" height="1" fill="#808080"/><rect x="6" y="9" width="3" height="1" fill="#808080"/><rect x="7" y="10" width="1" height="1" fill="#808080"/></svg>
<div class="abs grp" style="left:26px;top:604px;width:181px;height:60px;"></div>
<div class="t lbl" style="left:33px;top:597.7px;padding:0 2px">Sweep Time</div>
<svg class="abs" style="left:33px;top:615px" width="12" height="12" shape-rendering="crispEdges"><rect x="3" y="2" width="6" height="8" fill="#d4d0c8"/><rect x="2" y="3" width="8" height="6" fill="#d4d0c8"/><rect x="4" y="0" width="4" height="1" fill="#808080"/><rect x="2" y="1" width="2" height="1" fill="#808080"/><rect x="8" y="1" width="2" height="1" fill="#808080"/><rect x="1" y="2" width="1" height="2" fill="#808080"/><rect x="0" y="4" width="1" height="4" fill="#808080"/><rect x="1" y="8" width="1" height="2" fill="#808080"/><rect x="4" y="1" width="4" height="1" fill="#404040"/><rect x="2" y="2" width="2" height="1" fill="#404040"/><rect x="8" y="2" width="2" height="1" fill="#404040"/><rect x="2" y="3" width="1" height="1" fill="#404040"/><rect x="1" y="4" width="1" height="4" fill="#404040"/><rect x="2" y="8" width="1" height="1" fill="#404040"/><rect x="4" y="11" width="4" height="1" fill="#fff"/><rect x="2" y="10" width="2" height="1" fill="#fff"/><rect x="8" y="10" width="2" height="1" fill="#fff"/><rect x="10" y="8" width="1" height="2" fill="#fff"/><rect x="11" y="4" width="1" height="4" fill="#fff"/><rect x="10" y="2" width="1" height="2" fill="#fff"/><rect x="4" y="10" width="4" height="1" fill="#d4d0c8"/><rect x="2" y="9" width="2" height="1" fill="#d4d0c8"/><rect x="8" y="9" width="2" height="1" fill="#d4d0c8"/><rect x="9" y="8" width="1" height="1" fill="#d4d0c8"/><rect x="10" y="4" width="1" height="4" fill="#d4d0c8"/><rect x="9" y="3" width="1" height="1" fill="#d4d0c8"/><rect x="5" y="4" width="2" height="1" fill="#808080"/><rect x="4" y="5" width="4" height="2" fill="#808080"/><rect x="5" y="7" width="2" height="1" fill="#808080"/></svg>
<div class="t " style="left:50.0px;top:614.7px;color:#808080;text-shadow:1px 1px #fff">Auto</div>
<svg class="abs" style="left:33px;top:634px" width="12" height="12" shape-rendering="crispEdges"><rect x="3" y="2" width="6" height="8" fill="#d4d0c8"/><rect x="2" y="3" width="8" height="6" fill="#d4d0c8"/><rect x="4" y="0" width="4" height="1" fill="#808080"/><rect x="2" y="1" width="2" height="1" fill="#808080"/><rect x="8" y="1" width="2" height="1" fill="#808080"/><rect x="1" y="2" width="1" height="2" fill="#808080"/><rect x="0" y="4" width="1" height="4" fill="#808080"/><rect x="1" y="8" width="1" height="2" fill="#808080"/><rect x="4" y="1" width="4" height="1" fill="#404040"/><rect x="2" y="2" width="2" height="1" fill="#404040"/><rect x="8" y="2" width="2" height="1" fill="#404040"/><rect x="2" y="3" width="1" height="1" fill="#404040"/><rect x="1" y="4" width="1" height="4" fill="#404040"/><rect x="2" y="8" width="1" height="1" fill="#404040"/><rect x="4" y="11" width="4" height="1" fill="#fff"/><rect x="2" y="10" width="2" height="1" fill="#fff"/><rect x="8" y="10" width="2" height="1" fill="#fff"/><rect x="10" y="8" width="1" height="2" fill="#fff"/><rect x="11" y="4" width="1" height="4" fill="#fff"/><rect x="10" y="2" width="1" height="2" fill="#fff"/><rect x="4" y="10" width="4" height="1" fill="#d4d0c8"/><rect x="2" y="9" width="2" height="1" fill="#d4d0c8"/><rect x="8" y="9" width="2" height="1" fill="#d4d0c8"/><rect x="9" y="8" width="1" height="1" fill="#d4d0c8"/><rect x="10" y="4" width="1" height="4" fill="#d4d0c8"/><rect x="9" y="3" width="1" height="1" fill="#d4d0c8"/></svg>
<div class="t " style="left:50.0px;top:633.7px;color:#808080;text-shadow:1px 1px #fff">Man</div>
<div class="abs sunk" style="left:79px;top:620px;width:71px;height:24px;background:#d4d0c8"></div>
<div class="t " style="left:82.0px;top:621.7px;color:#808080;text-shadow:1px 1px #fff">0</div>
<div class="abs sunk" style="left:157px;top:620px;width:46px;height:24px;background:#d4d0c8"></div>
<div class="abs cbtn" style="left:185px;top:622px;width:16px;height:20px;"></div>
<svg class="abs" style="left:185px;top:622px" width="16" height="20" shape-rendering="crispEdges"><rect x="4" y="8" width="7" height="1" fill="#808080"/><rect x="5" y="9" width="5" height="1" fill="#808080"/><rect x="6" y="10" width="3" height="1" fill="#808080"/><rect x="7" y="11" width="1" height="1" fill="#808080"/></svg>
<div class="t " style="left:216.5px;top:585.2px;">Attenuation</div>
<div class="abs sunk" style="left:293px;top:583px;width:60px;height:22px;background:#fff"></div>
<div class="abs cbtn" style="left:335px;top:585px;width:16px;height:9px;"></div>
<div class="abs cbtn" style="left:335px;top:594px;width:16px;height:9px;"></div>
<svg class="abs" style="left:335px;top:585px" width="16" height="18" shape-rendering="crispEdges"><rect x="7" y="3" width="1" height="1" fill="#000"/><rect x="6" y="4" width="3" height="1" fill="#000"/><rect x="6" y="12" width="3" height="1" fill="#000"/><rect x="7" y="13" width="1" height="1" fill="#000"/></svg>
<div class="t " style="left:296.5px;top:588.2px;">10</div>
<div class="t " style="left:216.5px;top:607.7px;">ResBW</div>
<div class="abs sunk" style="left:272px;top:609px;width:82px;height:20px;background:#fff"></div>
<div class="abs cbtn" style="left:336px;top:611px;width:16px;height:16px;"></div>
<svg class="abs" style="left:336px;top:611px" width="16" height="16" shape-rendering="crispEdges"><rect x="4" y="6" width="7" height="1" fill="#000"/><rect x="5" y="7" width="5" height="1" fill="#000"/><rect x="6" y="8" width="3" height="1" fill="#000"/><rect x="7" y="9" width="1" height="1" fill="#000"/></svg>
<div class="t " style="left:278.5px;top:613.2px;">191 Hz</div>
<div class="t " style="left:216.5px;top:633.7px;">Ref. Level(dBm)</div>
<div class="abs sunk" style="left:298px;top:631px;width:55px;height:20px;background:#fff"></div>
<div class="abs cbtn" style="left:335px;top:633px;width:16px;height:8px;"></div>
<div class="abs cbtn" style="left:335px;top:641px;width:16px;height:8px;"></div>
<svg class="abs" style="left:335px;top:633px" width="16" height="16" shape-rendering="crispEdges"><rect x="7" y="3" width="1" height="1" fill="#000"/><rect x="6" y="4" width="3" height="1" fill="#000"/><rect x="6" y="11" width="3" height="1" fill="#000"/><rect x="7" y="12" width="1" height="1" fill="#000"/></svg>
<div class="t " style="left:301.5px;top:635.2px;">-12.5</div>
<div class="t " style="left:360.5px;top:608.7px;">VidBW</div>
<div class="abs sunk" style="left:401px;top:605px;width:82px;height:20px;background:#d4d0c8"></div>
<div class="abs cbtn" style="left:465px;top:607px;width:16px;height:16px;"></div>
<svg class="abs" style="left:465px;top:607px" width="16" height="16" shape-rendering="crispEdges"><rect x="4" y="6" width="7" height="1" fill="#808080"/><rect x="5" y="7" width="5" height="1" fill="#808080"/><rect x="6" y="8" width="3" height="1" fill="#808080"/><rect x="7" y="9" width="1" height="1" fill="#808080"/></svg>
<div class="t " style="left:394.5px;top:583.7px;">Det.</div>
<div class="abs sunk" style="left:427px;top:579px;width:57px;height:20px;background:#d4d0c8"></div>
<div class="abs cbtn" style="left:466px;top:581px;width:16px;height:16px;"></div>
<svg class="abs" style="left:466px;top:581px" width="16" height="16" shape-rendering="crispEdges"><rect x="4" y="6" width="7" height="1" fill="#808080"/><rect x="5" y="7" width="5" height="1" fill="#808080"/><rect x="6" y="8" width="3" height="1" fill="#808080"/><rect x="7" y="9" width="1" height="1" fill="#808080"/></svg>
<div class="t " style="left:487.5px;top:579.7px;">VidAvg</div>
<div class="abs sunk" style="left:524px;top:575px;width:58px;height:21px;background:#fff"></div>
<div class="abs cbtn" style="left:564px;top:577px;width:16px;height:8px;"></div>
<div class="abs cbtn" style="left:564px;top:585px;width:16px;height:9px;"></div>
<svg class="abs" style="left:564px;top:577px" width="16" height="17" shape-rendering="crispEdges"><rect x="7" y="3" width="1" height="1" fill="#000"/><rect x="6" y="4" width="3" height="1" fill="#000"/><rect x="6" y="11" width="3" height="1" fill="#000"/><rect x="7" y="12" width="1" height="1" fill="#000"/></svg>
<div class="t " style="left:527.5px;top:579.7px;">15</div>
<div class="abs btn" style="left:505px;top:603px;width:87px;height:23px;"></div>
<div class="t" style="left:505px;width:87px;text-align:center;top:609.2px;color:#fff">Refresh Co Pol</div>
<div class="t" style="left:504px;width:87px;text-align:center;top:608.2px;color:#808080">Refresh Co Pol</div>
<div class="abs btn" style="left:505px;top:630px;width:87px;height:23px;"></div>
<div class="t" style="left:505px;width:87px;text-align:center;top:636.2px;color:#fff">Refresh X Pol</div>
<div class="t" style="left:504px;width:87px;text-align:center;top:635.2px;color:#808080">Refresh X Pol</div>
<div class="t " style="left:388.5px;top:636.7px;">dB/div</div>
<div class="abs sunk" style="left:428px;top:631px;width:56px;height:20px;background:#fff"></div>
<div class="abs cbtn" style="left:466px;top:633px;width:16px;height:16px;"></div>
<svg class="abs" style="left:466px;top:633px" width="16" height="16" shape-rendering="crispEdges"><rect x="4" y="6" width="7" height="1" fill="#000"/><rect x="5" y="7" width="5" height="1" fill="#000"/><rect x="6" y="8" width="3" height="1" fill="#000"/><rect x="7" y="9" width="1" height="1" fill="#000"/></svg>
<div class="t " style="left:431.5px;top:635.2px;">10</div>
<div class="abs" style="left:620px;top:46px;width:299px;height:700px;box-shadow:inset -1px -1px #fff,inset 1px 1px #808080,inset -2px -2px #d4d0c8,inset 2px 2px #404040;"></div>
<div class="abs grp" style="left:624px;top:58px;width:289px;height:570px;"></div>
<div class="t lbl" style="left:631.5px;top:52.7px;padding:0 2px">Monitoring Configuration</div>
<div class="abs" style="left:632px;top:93px;width:272px;height:1px;background:#fff"></div>
<div class="abs" style="left:632px;top:93px;width:1px;height:478px;background:#fff"></div>
<div class="abs" style="left:633px;top:570px;width:271px;height:1px;background:#808080"></div>
<div class="abs" style="left:632px;top:571px;width:272px;height:1px;background:#404040"></div>
<div class="abs" style="left:921px;top:0px;width:1px;height:645px;background:#404040"></div>
<div class="abs" style="left:920px;top:46px;width:1px;height:600px;background:#d4d0c8"></div>
<div class="abs" style="left:635px;top:75px;width:86px;height:19px;background:#d4d0c8;box-shadow:inset -1px 0 #404040,inset 1px 1px #fff,inset -2px 0 #808080;"></div>
<div class="abs" style="left:803px;top:75px;width:85px;height:19px;background:#d4d0c8;box-shadow:inset -1px 0 #404040,inset 1px 1px #fff,inset -2px 0 #808080;"></div>
<div class="abs" style="left:718px;top:72px;width:86px;height:23px;background:#d4d0c8;box-shadow:inset -1px 0 #404040,inset 1px 1px #fff,inset -2px 0 #808080;"></div>
<div class="t " style="left:640.0px;top:77.7px;">Spect Plan Info</div>
<div class="t " style="left:725.5px;top:75.2px;">Trace/Markers</div>
<div class="t " style="left:808.5px;top:77.7px;">Planned Values</div>
<div class="abs grp" style="left:642px;top:106px;width:126px;height:462px;"></div>
<div class="t lbl" style="left:649px;top:99.7px;padding:0 2px">Trace Options</div>
<svg class="abs" style="left:655px;top:122px" width="12" height="12" shape-rendering="crispEdges"><rect x="3" y="2" width="6" height="8" fill="#fff"/><rect x="2" y="3" width="8" height="6" fill="#fff"/><rect x="4" y="0" width="4" height="1" fill="#808080"/><rect x="2" y="1" width="2" height="1" fill="#808080"/><rect x="8" y="1" width="2" height="1" fill="#808080"/><rect x="1" y="2" width="1" height="2" fill="#808080"/><rect x="0" y="4" width="1" height="4" fill="#808080"/><rect x="1" y="8" width="1" height="2" fill="#808080"/><rect x="4" y="1" width="4" height="1" fill="#404040"/><rect x="2" y="2" width="2" height="1" fill="#404040"/><rect x="8" y="2" width="2" height="1" fill="#404040"/><rect x="2" y="3" width="1" height="1" fill="#404040"/><rect x="1" y="4" width="1" height="4" fill="#404040"/><rect x="2" y="8" width="1" height="1" fill="#404040"/><rect x="4" y="11" width="4" height="1" fill="#fff"/><rect x="2" y="10" width="2" height="1" fill="#fff"/><rect x="8" y="10" width="2" height="1" fill="#fff"/><rect x="10" y="8" width="1" height="2" fill="#fff"/><rect x="11" y="4" width="1" height="4" fill="#fff"/><rect x="10" y="2" width="1" height="2" fill="#fff"/><rect x="4" y="10" width="4" height="1" fill="#d4d0c8"/><rect x="2" y="9" width="2" height="1" fill="#d4d0c8"/><rect x="8" y="9" width="2" height="1" fill="#d4d0c8"/><rect x="9" y="8" width="1" height="1" fill="#d4d0c8"/><rect x="10" y="4" width="1" height="4" fill="#d4d0c8"/><rect x="9" y="3" width="1" height="1" fill="#d4d0c8"/><rect x="5" y="4" width="2" height="1" fill="#000"/><rect x="4" y="5" width="4" height="2" fill="#000"/><rect x="5" y="7" width="2" height="1" fill="#000"/></svg>
<div class="t " style="left:672.0px;top:121.2px;">Clear Write A</div>
<svg class="abs" style="left:655px;top:138px" width="12" height="12" shape-rendering="crispEdges"><rect x="3" y="2" width="6" height="8" fill="#fff"/><rect x="2" y="3" width="8" height="6" fill="#fff"/><rect x="4" y="0" width="4" height="1" fill="#808080"/><rect x="2" y="1" width="2" height="1" fill="#808080"/><rect x="8" y="1" width="2" height="1" fill="#808080"/><rect x="1" y="2" width="1" height="2" fill="#808080"/><rect x="0" y="4" width="1" height="4" fill="#808080"/><rect x="1" y="8" width="1" height="2" fill="#808080"/><rect x="4" y="1" width="4" height="1" fill="#404040"/><rect x="2" y="2" width="2" height="1" fill="#404040"/><rect x="8" y="2" width="2" height="1" fill="#404040"/><rect x="2" y="3" width="1" height="1" fill="#404040"/><rect x="1" y="4" width="1" height="4" fill="#404040"/><rect x="2" y="8" width="1" height="1" fill="#404040"/><rect x="4" y="11" width="4" height="1" fill="#fff"/><rect x="2" y="10" width="2" height="1" fill="#fff"/><rect x="8" y="10" width="2" height="1" fill="#fff"/><rect x="10" y="8" width="1" height="2" fill="#fff"/><rect x="11" y="4" width="1" height="4" fill="#fff"/><rect x="10" y="2" width="1" height="2" fill="#fff"/><rect x="4" y="10" width="4" height="1" fill="#d4d0c8"/><rect x="2" y="9" width="2" height="1" fill="#d4d0c8"/><rect x="8" y="9" width="2" height="1" fill="#d4d0c8"/><rect x="9" y="8" width="1" height="1" fill="#d4d0c8"/><rect x="10" y="4" width="1" height="4" fill="#d4d0c8"/><rect x="9" y="3" width="1" height="1" fill="#d4d0c8"/></svg>
<div class="t " style="left:672.0px;top:137.2px;">Max Hold A</div>
<svg class="abs" style="left:655px;top:154px" width="12" height="12" shape-rendering="crispEdges"><rect x="3" y="2" width="6" height="8" fill="#fff"/><rect x="2" y="3" width="8" height="6" fill="#fff"/><rect x="4" y="0" width="4" height="1" fill="#808080"/><rect x="2" y="1" width="2" height="1" fill="#808080"/><rect x="8" y="1" width="2" height="1" fill="#808080"/><rect x="1" y="2" width="1" height="2" fill="#808080"/><rect x="0" y="4" width="1" height="4" fill="#808080"/><rect x="1" y="8" width="1" height="2" fill="#808080"/><rect x="4" y="1" width="4" height="1" fill="#404040"/><rect x="2" y="2" width="2" height="1" fill="#404040"/><rect x="8" y="2" width="2" height="1" fill="#404040"/><rect x="2" y="3" width="1" height="1" fill="#404040"/><rect x="1" y="4" width="1" height="4" fill="#404040"/><rect x="2" y="8" width="1" height="1" fill="#404040"/><rect x="4" y="11" width="4" height="1" fill="#fff"/><rect x="2" y="10" width="2" height="1" fill="#fff"/><rect x="8" y="10" width="2" height="1" fill="#fff"/><rect x="10" y="8" width="1" height="2" fill="#fff"/><rect x="11" y="4" width="1" height="4" fill="#fff"/><rect x="10" y="2" width="1" height="2" fill="#fff"/><rect x="4" y="10" width="4" height="1" fill="#d4d0c8"/><rect x="2" y="9" width="2" height="1" fill="#d4d0c8"/><rect x="8" y="9" width="2" height="1" fill="#d4d0c8"/><rect x="9" y="8" width="1" height="1" fill="#d4d0c8"/><rect x="10" y="4" width="1" height="4" fill="#d4d0c8"/><rect x="9" y="3" width="1" height="1" fill="#d4d0c8"/></svg>
<div class="t " style="left:672.0px;top:153.2px;">Min Hold A</div>
<svg class="abs" style="left:655px;top:171px" width="12" height="12" shape-rendering="crispEdges"><rect x="3" y="2" width="6" height="8" fill="#fff"/><rect x="2" y="3" width="8" height="6" fill="#fff"/><rect x="4" y="0" width="4" height="1" fill="#808080"/><rect x="2" y="1" width="2" height="1" fill="#808080"/><rect x="8" y="1" width="2" height="1" fill="#808080"/><rect x="1" y="2" width="1" height="2" fill="#808080"/><rect x="0" y="4" width="1" height="4" fill="#808080"/><rect x="1" y="8" width="1" height="2" fill="#808080"/><rect x="4" y="1" width="4" height="1" fill="#404040"/><rect x="2" y="2" width="2" height="1" fill="#404040"/><rect x="8" y="2" width="2" height="1" fill="#404040"/><rect x="2" y="3" width="1" height="1" fill="#404040"/><rect x="1" y="4" width="1" height="4" fill="#404040"/><rect x="2" y="8" width="1" height="1" fill="#404040"/><rect x="4" y="11" width="4" height="1" fill="#fff"/><rect x="2" y="10" width="2" height="1" fill="#fff"/><rect x="8" y="10" width="2" height="1" fill="#fff"/><rect x="10" y="8" width="1" height="2" fill="#fff"/><rect x="11" y="4" width="1" height="4" fill="#fff"/><rect x="10" y="2" width="1" height="2" fill="#fff"/><rect x="4" y="10" width="4" height="1" fill="#d4d0c8"/><rect x="2" y="9" width="2" height="1" fill="#d4d0c8"/><rect x="8" y="9" width="2" height="1" fill="#d4d0c8"/><rect x="9" y="8" width="1" height="1" fill="#d4d0c8"/><rect x="10" y="4" width="1" height="4" fill="#d4d0c8"/><rect x="9" y="3" width="1" height="1" fill="#d4d0c8"/></svg>
<div class="t " style="left:672.0px;top:170.2px;">View A</div>
<svg class="abs" style="left:655px;top:187px" width="12" height="12" shape-rendering="crispEdges"><rect x="3" y="2" width="6" height="8" fill="#fff"/><rect x="2" y="3" width="8" height="6" fill="#fff"/><rect x="4" y="0" width="4" height="1" fill="#808080"/><rect x="2" y="1" width="2" height="1" fill="#808080"/><rect x="8" y="1" width="2" height="1" fill="#808080"/><rect x="1" y="2" width="1" height="2" fill="#808080"/><rect x="0" y="4" width="1" height="4" fill="#808080"/><rect x="1" y="8" width="1" height="2" fill="#808080"/><rect x="4" y="1" width="4" height="1" fill="#404040"/><rect x="2" y="2" width="2" height="1" fill="#404040"/><rect x="8" y="2" width="2" height="1" fill="#404040"/><rect x="2" y="3" width="1" height="1" fill="#404040"/><rect x="1" y="4" width="1" height="4" fill="#404040"/><rect x="2" y="8" width="1" height="1" fill="#404040"/><rect x="4" y="11" width="4" height="1" fill="#fff"/><rect x="2" y="10" width="2" height="1" fill="#fff"/><rect x="8" y="10" width="2" height="1" fill="#fff"/><rect x="10" y="8" width="1" height="2" fill="#fff"/><rect x="11" y="4" width="1" height="4" fill="#fff"/><rect x="10" y="2" width="1" height="2" fill="#fff"/><rect x="4" y="10" width="4" height="1" fill="#d4d0c8"/><rect x="2" y="9" width="2" height="1" fill="#d4d0c8"/><rect x="8" y="9" width="2" height="1" fill="#d4d0c8"/><rect x="9" y="8" width="1" height="1" fill="#d4d0c8"/><rect x="10" y="4" width="1" height="4" fill="#d4d0c8"/><rect x="9" y="3" width="1" height="1" fill="#d4d0c8"/></svg>
<div class="t " style="left:672.0px;top:186.2px;">Blank A</div>
<svg class="abs" style="left:655px;top:216px" width="12" height="12" shape-rendering="crispEdges"><rect x="3" y="2" width="6" height="8" fill="#fff"/><rect x="2" y="3" width="8" height="6" fill="#fff"/><rect x="4" y="0" width="4" height="1" fill="#808080"/><rect x="2" y="1" width="2" height="1" fill="#808080"/><rect x="8" y="1" width="2" height="1" fill="#808080"/><rect x="1" y="2" width="1" height="2" fill="#808080"/><rect x="0" y="4" width="1" height="4" fill="#808080"/><rect x="1" y="8" width="1" height="2" fill="#808080"/><rect x="4" y="1" width="4" height="1" fill="#404040"/><rect x="2" y="2" width="2" height="1" fill="#404040"/><rect x="8" y="2" width="2" height="1" fill="#404040"/><rect x="2" y="3" width="1" height="1" fill="#404040"/><rect x="1" y="4" width="1" height="4" fill="#404040"/><rect x="2" y="8" width="1" height="1" fill="#404040"/><rect x="4" y="11" width="4" height="1" fill="#fff"/><rect x="2" y="10" width="2" height="1" fill="#fff"/><rect x="8" y="10" width="2" height="1" fill="#fff"/><rect x="10" y="8" width="1" height="2" fill="#fff"/><rect x="11" y="4" width="1" height="4" fill="#fff"/><rect x="10" y="2" width="1" height="2" fill="#fff"/><rect x="4" y="10" width="4" height="1" fill="#d4d0c8"/><rect x="2" y="9" width="2" height="1" fill="#d4d0c8"/><rect x="8" y="9" width="2" height="1" fill="#d4d0c8"/><rect x="9" y="8" width="1" height="1" fill="#d4d0c8"/><rect x="10" y="4" width="1" height="4" fill="#d4d0c8"/><rect x="9" y="3" width="1" height="1" fill="#d4d0c8"/></svg>
<div class="t " style="left:672.0px;top:215.2px;">Clear Write B</div>
<svg class="abs" style="left:655px;top:232px" width="12" height="12" shape-rendering="crispEdges"><rect x="3" y="2" width="6" height="8" fill="#fff"/><rect x="2" y="3" width="8" height="6" fill="#fff"/><rect x="4" y="0" width="4" height="1" fill="#808080"/><rect x="2" y="1" width="2" height="1" fill="#808080"/><rect x="8" y="1" width="2" height="1" fill="#808080"/><rect x="1" y="2" width="1" height="2" fill="#808080"/><rect x="0" y="4" width="1" height="4" fill="#808080"/><rect x="1" y="8" width="1" height="2" fill="#808080"/><rect x="4" y="1" width="4" height="1" fill="#404040"/><rect x="2" y="2" width="2" height="1" fill="#404040"/><rect x="8" y="2" width="2" height="1" fill="#404040"/><rect x="2" y="3" width="1" height="1" fill="#404040"/><rect x="1" y="4" width="1" height="4" fill="#404040"/><rect x="2" y="8" width="1" height="1" fill="#404040"/><rect x="4" y="11" width="4" height="1" fill="#fff"/><rect x="2" y="10" width="2" height="1" fill="#fff"/><rect x="8" y="10" width="2" height="1" fill="#fff"/><rect x="10" y="8" width="1" height="2" fill="#fff"/><rect x="11" y="4" width="1" height="4" fill="#fff"/><rect x="10" y="2" width="1" height="2" fill="#fff"/><rect x="4" y="10" width="4" height="1" fill="#d4d0c8"/><rect x="2" y="9" width="2" height="1" fill="#d4d0c8"/><rect x="8" y="9" width="2" height="1" fill="#d4d0c8"/><rect x="9" y="8" width="1" height="1" fill="#d4d0c8"/><rect x="10" y="4" width="1" height="4" fill="#d4d0c8"/><rect x="9" y="3" width="1" height="1" fill="#d4d0c8"/></svg>
<div class="t " style="left:672.0px;top:231.2px;">Max Hold B</div>
<svg class="abs" style="left:655px;top:249px" width="12" height="12" shape-rendering="crispEdges"><rect x="3" y="2" width="6" height="8" fill="#fff"/><rect x="2" y="3" width="8" height="6" fill="#fff"/><rect x="4" y="0" width="4" height="1" fill="#808080"/><rect x="2" y="1" width="2" height="1" fill="#808080"/><rect x="8" y="1" width="2" height="1" fill="#808080"/><rect x="1" y="2" width="1" height="2" fill="#808080"/><rect x="0" y="4" width="1" height="4" fill="#808080"/><rect x="1" y="8" width="1" height="2" fill="#808080"/><rect x="4" y="1" width="4" height="1" fill="#404040"/><rect x="2" y="2" width="2" height="1" fill="#404040"/><rect x="8" y="2" width="2" height="1" fill="#404040"/><rect x="2" y="3" width="1" height="1" fill="#404040"/><rect x="1" y="4" width="1" height="4" fill="#404040"/><rect x="2" y="8" width="1" height="1" fill="#404040"/><rect x="4" y="11" width="4" height="1" fill="#fff"/><rect x="2" y="10" width="2" height="1" fill="#fff"/><rect x="8" y="10" width="2" height="1" fill="#fff"/><rect x="10" y="8" width="1" height="2" fill="#fff"/><rect x="11" y="4" width="1" height="4" fill="#fff"/><rect x="10" y="2" width="1" height="2" fill="#fff"/><rect x="4" y="10" width="4" height="1" fill="#d4d0c8"/><rect x="2" y="9" width="2" height="1" fill="#d4d0c8"/><rect x="8" y="9" width="2" height="1" fill="#d4d0c8"/><rect x="9" y="8" width="1" height="1" fill="#d4d0c8"/><rect x="10" y="4" width="1" height="4" fill="#d4d0c8"/><rect x="9" y="3" width="1" height="1" fill="#d4d0c8"/></svg>
<div class="t " style="left:672.0px;top:248.2px;">Min Hold B</div>
<svg class="abs" style="left:655px;top:265px" width="12" height="12" shape-rendering="crispEdges"><rect x="3" y="2" width="6" height="8" fill="#fff"/><rect x="2" y="3" width="8" height="6" fill="#fff"/><rect x="4" y="0" width="4" height="1" fill="#808080"/><rect x="2" y="1" width="2" height="1" fill="#808080"/><rect x="8" y="1" width="2" height="1" fill="#808080"/><rect x="1" y="2" width="1" height="2" fill="#808080"/><rect x="0" y="4" width="1" height="4" fill="#808080"/><rect x="1" y="8" width="1" height="2" fill="#808080"/><rect x="4" y="1" width="4" height="1" fill="#404040"/><rect x="2" y="2" width="2" height="1" fill="#404040"/><rect x="8" y="2" width="2" height="1" fill="#404040"/><rect x="2" y="3" width="1" height="1" fill="#404040"/><rect x="1" y="4" width="1" height="4" fill="#404040"/><rect x="2" y="8" width="1" height="1" fill="#404040"/><rect x="4" y="11" width="4" height="1" fill="#fff"/><rect x="2" y="10" width="2" height="1" fill="#fff"/><rect x="8" y="10" width="2" height="1" fill="#fff"/><rect x="10" y="8" width="1" height="2" fill="#fff"/><rect x="11" y="4" width="1" height="4" fill="#fff"/><rect x="10" y="2" width="1" height="2" fill="#fff"/><rect x="4" y="10" width="4" height="1" fill="#d4d0c8"/><rect x="2" y="9" width="2" height="1" fill="#d4d0c8"/><rect x="8" y="9" width="2" height="1" fill="#d4d0c8"/><rect x="9" y="8" width="1" height="1" fill="#d4d0c8"/><rect x="10" y="4" width="1" height="4" fill="#d4d0c8"/><rect x="9" y="3" width="1" height="1" fill="#d4d0c8"/></svg>
<div class="t " style="left:672.0px;top:264.2px;">View B</div>
<svg class="abs" style="left:655px;top:281px" width="12" height="12" shape-rendering="crispEdges"><rect x="3" y="2" width="6" height="8" fill="#fff"/><rect x="2" y="3" width="8" height="6" fill="#fff"/><rect x="4" y="0" width="4" height="1" fill="#808080"/><rect x="2" y="1" width="2" height="1" fill="#808080"/><rect x="8" y="1" width="2" height="1" fill="#808080"/><rect x="1" y="2" width="1" height="2" fill="#808080"/><rect x="0" y="4" width="1" height="4" fill="#808080"/><rect x="1" y="8" width="1" height="2" fill="#808080"/><rect x="4" y="1" width="4" height="1" fill="#404040"/><rect x="2" y="2" width="2" height="1" fill="#404040"/><rect x="8" y="2" width="2" height="1" fill="#404040"/><rect x="2" y="3" width="1" height="1" fill="#404040"/><rect x="1" y="4" width="1" height="4" fill="#404040"/><rect x="2" y="8" width="1" height="1" fill="#404040"/><rect x="4" y="11" width="4" height="1" fill="#fff"/><rect x="2" y="10" width="2" height="1" fill="#fff"/><rect x="8" y="10" width="2" height="1" fill="#fff"/><rect x="10" y="8" width="1" height="2" fill="#fff"/><rect x="11" y="4" width="1" height="4" fill="#fff"/><rect x="10" y="2" width="1" height="2" fill="#fff"/><rect x="4" y="10" width="4" height="1" fill="#d4d0c8"/><rect x="2" y="9" width="2" height="1" fill="#d4d0c8"/><rect x="8" y="9" width="2" height="1" fill="#d4d0c8"/><rect x="9" y="8" width="1" height="1" fill="#d4d0c8"/><rect x="10" y="4" width="1" height="4" fill="#d4d0c8"/><rect x="9" y="3" width="1" height="1" fill="#d4d0c8"/><rect x="5" y="4" width="2" height="1" fill="#000"/><rect x="4" y="5" width="4" height="2" fill="#000"/><rect x="5" y="7" width="2" height="1" fill="#000"/></svg>
<div class="t " style="left:672.0px;top:280.2px;">Blank B</div>
<svg class="abs" style="left:655px;top:310px" width="12" height="12" shape-rendering="crispEdges"><rect x="3" y="2" width="6" height="8" fill="#fff"/><rect x="2" y="3" width="8" height="6" fill="#fff"/><rect x="4" y="0" width="4" height="1" fill="#808080"/><rect x="2" y="1" width="2" height="1" fill="#808080"/><rect x="8" y="1" width="2" height="1" fill="#808080"/><rect x="1" y="2" width="1" height="2" fill="#808080"/><rect x="0" y="4" width="1" height="4" fill="#808080"/><rect x="1" y="8" width="1" height="2" fill="#808080"/><rect x="4" y="1" width="4" height="1" fill="#404040"/><rect x="2" y="2" width="2" height="1" fill="#404040"/><rect x="8" y="2" width="2" height="1" fill="#404040"/><rect x="2" y="3" width="1" height="1" fill="#404040"/><rect x="1" y="4" width="1" height="4" fill="#404040"/><rect x="2" y="8" width="1" height="1" fill="#404040"/><rect x="4" y="11" width="4" height="1" fill="#fff"/><rect x="2" y="10" width="2" height="1" fill="#fff"/><rect x="8" y="10" width="2" height="1" fill="#fff"/><rect x="10" y="8" width="1" height="2" fill="#fff"/><rect x="11" y="4" width="1" height="4" fill="#fff"/><rect x="10" y="2" width="1" height="2" fill="#fff"/><rect x="4" y="10" width="4" height="1" fill="#d4d0c8"/><rect x="2" y="9" width="2" height="1" fill="#d4d0c8"/><rect x="8" y="9" width="2" height="1" fill="#d4d0c8"/><rect x="9" y="8" width="1" height="1" fill="#d4d0c8"/><rect x="10" y="4" width="1" height="4" fill="#d4d0c8"/><rect x="9" y="3" width="1" height="1" fill="#d4d0c8"/></svg>
<div class="t " style="left:672.0px;top:309.2px;">Clear Write C</div>
<svg class="abs" style="left:655px;top:327px" width="12" height="12" shape-rendering="crispEdges"><rect x="3" y="2" width="6" height="8" fill="#fff"/><rect x="2" y="3" width="8" height="6" fill="#fff"/><rect x="4" y="0" width="4" height="1" fill="#808080"/><rect x="2" y="1" width="2" height="1" fill="#808080"/><rect x="8" y="1" width="2" height="1" fill="#808080"/><rect x="1" y="2" width="1" height="2" fill="#808080"/><rect x="0" y="4" width="1" height="4" fill="#808080"/><rect x="1" y="8" width="1" height="2" fill="#808080"/><rect x="4" y="1" width="4" height="1" fill="#404040"/><rect x="2" y="2" width="2" height="1" fill="#404040"/><rect x="8" y="2" width="2" height="1" fill="#404040"/><rect x="2" y="3" width="1" height="1" fill="#404040"/><rect x="1" y="4" width="1" height="4" fill="#404040"/><rect x="2" y="8" width="1" height="1" fill="#404040"/><rect x="4" y="11" width="4" height="1" fill="#fff"/><rect x="2" y="10" width="2" height="1" fill="#fff"/><rect x="8" y="10" width="2" height="1" fill="#fff"/><rect x="10" y="8" width="1" height="2" fill="#fff"/><rect x="11" y="4" width="1" height="4" fill="#fff"/><rect x="10" y="2" width="1" height="2" fill="#fff"/><rect x="4" y="10" width="4" height="1" fill="#d4d0c8"/><rect x="2" y="9" width="2" height="1" fill="#d4d0c8"/><rect x="8" y="9" width="2" height="1" fill="#d4d0c8"/><rect x="9" y="8" width="1" height="1" fill="#d4d0c8"/><rect x="10" y="4" width="1" height="4" fill="#d4d0c8"/><rect x="9" y="3" width="1" height="1" fill="#d4d0c8"/></svg>
<div class="t " style="left:672.0px;top:326.2px;">Max Hold C</div>
<svg class="abs" style="left:655px;top:343px" width="12" height="12" shape-rendering="crispEdges"><rect x="3" y="2" width="6" height="8" fill="#fff"/><rect x="2" y="3" width="8" height="6" fill="#fff"/><rect x="4" y="0" width="4" height="1" fill="#808080"/><rect x="2" y="1" width="2" height="1" fill="#808080"/><rect x="8" y="1" width="2" height="1" fill="#808080"/><rect x="1" y="2" width="1" height="2" fill="#808080"/><rect x="0" y="4" width="1" height="4" fill="#808080"/><rect x="1" y="8" width="1" height="2" fill="#808080"/><rect x="4" y="1" width="4" height="1" fill="#404040"/><rect x="2" y="2" width="2" height="1" fill="#404040"/><rect x="8" y="2" width="2" height="1" fill="#404040"/><rect x="2" y="3" width="1" height="1" fill="#404040"/><rect x="1" y="4" width="1" height="4" fill="#404040"/><rect x="2" y="8" width="1" height="1" fill="#404040"/><rect x="4" y="11" width="4" height="1" fill="#fff"/><rect x="2" y="10" width="2" height="1" fill="#fff"/><rect x="8" y="10" width="2" height="1" fill="#fff"/><rect x="10" y="8" width="1" height="2" fill="#fff"/><rect x="11" y="4" width="1" height="4" fill="#fff"/><rect x="10" y="2" width="1" height="2" fill="#fff"/><rect x="4" y="10" width="4" height="1" fill="#d4d0c8"/><rect x="2" y="9" width="2" height="1" fill="#d4d0c8"/><rect x="8" y="9" width="2" height="1" fill="#d4d0c8"/><rect x="9" y="8" width="1" height="1" fill="#d4d0c8"/><rect x="10" y="4" width="1" height="4" fill="#d4d0c8"/><rect x="9" y="3" width="1" height="1" fill="#d4d0c8"/></svg>
<div class="t " style="left:672.0px;top:342.2px;">Min Hold C</div>
<svg class="abs" style="left:655px;top:359px" width="12" height="12" shape-rendering="crispEdges"><rect x="3" y="2" width="6" height="8" fill="#fff"/><rect x="2" y="3" width="8" height="6" fill="#fff"/><rect x="4" y="0" width="4" height="1" fill="#808080"/><rect x="2" y="1" width="2" height="1" fill="#808080"/><rect x="8" y="1" width="2" height="1" fill="#808080"/><rect x="1" y="2" width="1" height="2" fill="#808080"/><rect x="0" y="4" width="1" height="4" fill="#808080"/><rect x="1" y="8" width="1" height="2" fill="#808080"/><rect x="4" y="1" width="4" height="1" fill="#404040"/><rect x="2" y="2" width="2" height="1" fill="#404040"/><rect x="8" y="2" width="2" height="1" fill="#404040"/><rect x="2" y="3" width="1" height="1" fill="#404040"/><rect x="1" y="4" width="1" height="4" fill="#404040"/><rect x="2" y="8" width="1" height="1" fill="#404040"/><rect x="4" y="11" width="4" height="1" fill="#fff"/><rect x="2" y="10" width="2" height="1" fill="#fff"/><rect x="8" y="10" width="2" height="1" fill="#fff"/><rect x="10" y="8" width="1" height="2" fill="#fff"/><rect x="11" y="4" width="1" height="4" fill="#fff"/><rect x="10" y="2" width="1" height="2" fill="#fff"/><rect x="4" y="10" width="4" height="1" fill="#d4d0c8"/><rect x="2" y="9" width="2" height="1" fill="#d4d0c8"/><rect x="8" y="9" width="2" height="1" fill="#d4d0c8"/><rect x="9" y="8" width="1" height="1" fill="#d4d0c8"/><rect x="10" y="4" width="1" height="4" fill="#d4d0c8"/><rect x="9" y="3" width="1" height="1" fill="#d4d0c8"/></svg>
<div class="t " style="left:672.0px;top:358.2px;">View C</div>
<svg class="abs" style="left:655px;top:376px" width="12" height="12" shape-rendering="crispEdges"><rect x="3" y="2" width="6" height="8" fill="#fff"/><rect x="2" y="3" width="8" height="6" fill="#fff"/><rect x="4" y="0" width="4" height="1" fill="#808080"/><rect x="2" y="1" width="2" height="1" fill="#808080"/><rect x="8" y="1" width="2" height="1" fill="#808080"/><rect x="1" y="2" width="1" height="2" fill="#808080"/><rect x="0" y="4" width="1" height="4" fill="#808080"/><rect x="1" y="8" width="1" height="2" fill="#808080"/><rect x="4" y="1" width="4" height="1" fill="#404040"/><rect x="2" y="2" width="2" height="1" fill="#404040"/><rect x="8" y="2" width="2" height="1" fill="#404040"/><rect x="2" y="3" width="1" height="1" fill="#404040"/><rect x="1" y="4" width="1" height="4" fill="#404040"/><rect x="2" y="8" width="1" height="1" fill="#404040"/><rect x="4" y="11" width="4" height="1" fill="#fff"/><rect x="2" y="10" width="2" height="1" fill="#fff"/><rect x="8" y="10" width="2" height="1" fill="#fff"/><rect x="10" y="8" width="1" height="2" fill="#fff"/><rect x="11" y="4" width="1" height="4" fill="#fff"/><rect x="10" y="2" width="1" height="2" fill="#fff"/><rect x="4" y="10" width="4" height="1" fill="#d4d0c8"/><rect x="2" y="9" width="2" height="1" fill="#d4d0c8"/><rect x="8" y="9" width="2" height="1" fill="#d4d0c8"/><rect x="9" y="8" width="1" height="1" fill="#d4d0c8"/><rect x="10" y="4" width="1" height="4" fill="#d4d0c8"/><rect x="9" y="3" width="1" height="1" fill="#d4d0c8"/><rect x="5" y="4" width="2" height="1" fill="#000"/><rect x="4" y="5" width="4" height="2" fill="#000"/><rect x="5" y="7" width="2" height="1" fill="#000"/></svg>
<div class="t " style="left:672.0px;top:375.2px;">Blank C</div>
<div class="abs" style="left:651px;top:205px;width:105px;height:2px;background:#404040"></div>
<div class="abs" style="left:651px;top:299px;width:105px;height:2px;background:#404040"></div>
<div class="abs grp" style="left:647px;top:401px;width:112px;height:163px;"></div>
<div class="t lbl" style="left:655px;top:395.7px;padding:0 2px">Trace Registry</div>
<svg class="abs" style="left:657px;top:414px" width="13" height="13" shape-rendering="crispEdges"><rect x="0" y="0" width="13" height="13" fill="#fff"/><rect x="0" y="0" width="12" height="1" fill="#808080"/><rect x="0" y="0" width="1" height="12" fill="#808080"/><rect x="1" y="1" width="10" height="1" fill="#404040"/><rect x="1" y="1" width="1" height="10" fill="#404040"/><rect x="1" y="11" width="11" height="1" fill="#d4d0c8"/><rect x="11" y="1" width="1" height="11" fill="#d4d0c8"/><rect x="0" y="12" width="13" height="1" fill="#fff"/><rect x="12" y="0" width="1" height="13" fill="#fff"/><rect x="9" y="3" width="1" height="1" fill="#000"/><rect x="8" y="4" width="1" height="1" fill="#000"/><rect x="9" y="4" width="1" height="1" fill="#000"/><rect x="7" y="5" width="1" height="1" fill="#000"/><rect x="8" y="5" width="1" height="1" fill="#000"/><rect x="9" y="5" width="1" height="1" fill="#000"/><rect x="3" y="5" width="1" height="1" fill="#000"/><rect x="3" y="6" width="1" height="1" fill="#000"/><rect x="4" y="6" width="1" height="1" fill="#000"/><rect x="6" y="6" width="1" height="1" fill="#000"/><rect x="7" y="6" width="1" height="1" fill="#000"/><rect x="8" y="6" width="1" height="1" fill="#000"/><rect x="3" y="7" width="1" height="1" fill="#000"/><rect x="4" y="7" width="1" height="1" fill="#000"/><rect x="5" y="7" width="1" height="1" fill="#000"/><rect x="6" y="7" width="1" height="1" fill="#000"/><rect x="7" y="7" width="1" height="1" fill="#000"/><rect x="4" y="8" width="1" height="1" fill="#000"/><rect x="5" y="8" width="1" height="1" fill="#000"/><rect x="6" y="8" width="1" height="1" fill="#000"/><rect x="5" y="9" width="1" height="1" fill="#000"/></svg>
<div class="t " style="left:674.5px;top:413.7px;">A</div>
<svg class="abs" style="left:717px;top:414px" width="13" height="13" shape-rendering="crispEdges"><rect x="0" y="0" width="13" height="13" fill="#fff"/><rect x="0" y="0" width="12" height="1" fill="#808080"/><rect x="0" y="0" width="1" height="12" fill="#808080"/><rect x="1" y="1" width="10" height="1" fill="#404040"/><rect x="1" y="1" width="1" height="10" fill="#404040"/><rect x="1" y="11" width="11" height="1" fill="#d4d0c8"/><rect x="11" y="1" width="1" height="11" fill="#d4d0c8"/><rect x="0" y="12" width="13" height="1" fill="#fff"/><rect x="12" y="0" width="1" height="13" fill="#fff"/></svg>
<div class="t " style="left:735.0px;top:413.7px;">B</div>
<div class="abs btn" style="left:656px;top:432px;width:96px;height:22px;"></div>
<div class="t" style="left:656px;width:96px;text-align:center;top:436.7px">Display</div>
<div class="abs btn" style="left:656px;top:458px;width:96px;height:22px;"></div>
<div class="t" style="left:656px;width:96px;text-align:center;top:462.7px">Save</div>
<div class="abs btn" style="left:656px;top:484px;width:96px;height:22px;"></div>
<div class="t" style="left:656px;width:96px;text-align:center;top:488.7px">A+B/B+A</div>
<div class="abs btn" style="left:656px;top:510px;width:96px;height:22px;"></div>
<div class="t" style="left:656px;width:96px;text-align:center;top:514.7px">A-B/B-A</div>
<div class="abs btn" style="left:656px;top:536px;width:96px;height:22px;"></div>
<div class="t" style="left:656px;width:96px;text-align:center;top:540.7px">Trace Overlay</div>
<div class="abs grp" style="left:774px;top:106px;width:127px;height:142px;"></div>
<div class="t lbl" style="left:781.5px;top:99.7px;padding:0 2px">Marker A</div>
<svg class="abs" style="left:790px;top:122px" width="12" height="12" shape-rendering="crispEdges"><rect x="3" y="2" width="6" height="8" fill="#fff"/><rect x="2" y="3" width="8" height="6" fill="#fff"/><rect x="4" y="0" width="4" height="1" fill="#808080"/><rect x="2" y="1" width="2" height="1" fill="#808080"/><rect x="8" y="1" width="2" height="1" fill="#808080"/><rect x="1" y="2" width="1" height="2" fill="#808080"/><rect x="0" y="4" width="1" height="4" fill="#808080"/><rect x="1" y="8" width="1" height="2" fill="#808080"/><rect x="4" y="1" width="4" height="1" fill="#404040"/><rect x="2" y="2" width="2" height="1" fill="#404040"/><rect x="8" y="2" width="2" height="1" fill="#404040"/><rect x="2" y="3" width="1" height="1" fill="#404040"/><rect x="1" y="4" width="1" height="4" fill="#404040"/><rect x="2" y="8" width="1" height="1" fill="#404040"/><rect x="4" y="11" width="4" height="1" fill="#fff"/><rect x="2" y="10" width="2" height="1" fill="#fff"/><rect x="8" y="10" width="2" height="1" fill="#fff"/><rect x="10" y="8" width="1" height="2" fill="#fff"/><rect x="11" y="4" width="1" height="4" fill="#fff"/><rect x="10" y="2" width="1" height="2" fill="#fff"/><rect x="4" y="10" width="4" height="1" fill="#d4d0c8"/><rect x="2" y="9" width="2" height="1" fill="#d4d0c8"/><rect x="8" y="9" width="2" height="1" fill="#d4d0c8"/><rect x="9" y="8" width="1" height="1" fill="#d4d0c8"/><rect x="10" y="4" width="1" height="4" fill="#d4d0c8"/><rect x="9" y="3" width="1" height="1" fill="#d4d0c8"/></svg>
<div class="t " style="left:807.0px;top:121.2px;">Marker Off</div>
<svg class="abs" style="left:790px;top:138px" width="12" height="12" shape-rendering="crispEdges"><rect x="3" y="2" width="6" height="8" fill="#fff"/><rect x="2" y="3" width="8" height="6" fill="#fff"/><rect x="4" y="0" width="4" height="1" fill="#808080"/><rect x="2" y="1" width="2" height="1" fill="#808080"/><rect x="8" y="1" width="2" height="1" fill="#808080"/><rect x="1" y="2" width="1" height="2" fill="#808080"/><rect x="0" y="4" width="1" height="4" fill="#808080"/><rect x="1" y="8" width="1" height="2" fill="#808080"/><rect x="4" y="1" width="4" height="1" fill="#404040"/><rect x="2" y="2" width="2" height="1" fill="#404040"/><rect x="8" y="2" width="2" height="1" fill="#404040"/><rect x="2" y="3" width="1" height="1" fill="#404040"/><rect x="1" y="4" width="1" height="4" fill="#404040"/><rect x="2" y="8" width="1" height="1" fill="#404040"/><rect x="4" y="11" width="4" height="1" fill="#fff"/><rect x="2" y="10" width="2" height="1" fill="#fff"/><rect x="8" y="10" width="2" height="1" fill="#fff"/><rect x="10" y="8" width="1" height="2" fill="#fff"/><rect x="11" y="4" width="1" height="4" fill="#fff"/><rect x="10" y="2" width="1" height="2" fill="#fff"/><rect x="4" y="10" width="4" height="1" fill="#d4d0c8"/><rect x="2" y="9" width="2" height="1" fill="#d4d0c8"/><rect x="8" y="9" width="2" height="1" fill="#d4d0c8"/><rect x="9" y="8" width="1" height="1" fill="#d4d0c8"/><rect x="10" y="4" width="1" height="4" fill="#d4d0c8"/><rect x="9" y="3" width="1" height="1" fill="#d4d0c8"/></svg>
<div class="t " style="left:807.0px;top:137.7px;">Marker On</div>
<svg class="abs" style="left:790px;top:155px" width="12" height="12" shape-rendering="crispEdges"><rect x="3" y="2" width="6" height="8" fill="#fff"/><rect x="2" y="3" width="8" height="6" fill="#fff"/><rect x="4" y="0" width="4" height="1" fill="#808080"/><rect x="2" y="1" width="2" height="1" fill="#808080"/><rect x="8" y="1" width="2" height="1" fill="#808080"/><rect x="1" y="2" width="1" height="2" fill="#808080"/><rect x="0" y="4" width="1" height="4" fill="#808080"/><rect x="1" y="8" width="1" height="2" fill="#808080"/><rect x="4" y="1" width="4" height="1" fill="#404040"/><rect x="2" y="2" width="2" height="1" fill="#404040"/><rect x="8" y="2" width="2" height="1" fill="#404040"/><rect x="2" y="3" width="1" height="1" fill="#404040"/><rect x="1" y="4" width="1" height="4" fill="#404040"/><rect x="2" y="8" width="1" height="1" fill="#404040"/><rect x="4" y="11" width="4" height="1" fill="#fff"/><rect x="2" y="10" width="2" height="1" fill="#fff"/><rect x="8" y="10" width="2" height="1" fill="#fff"/><rect x="10" y="8" width="1" height="2" fill="#fff"/><rect x="11" y="4" width="1" height="4" fill="#fff"/><rect x="10" y="2" width="1" height="2" fill="#fff"/><rect x="4" y="10" width="4" height="1" fill="#d4d0c8"/><rect x="2" y="9" width="2" height="1" fill="#d4d0c8"/><rect x="8" y="9" width="2" height="1" fill="#d4d0c8"/><rect x="9" y="8" width="1" height="1" fill="#d4d0c8"/><rect x="10" y="4" width="1" height="4" fill="#d4d0c8"/><rect x="9" y="3" width="1" height="1" fill="#d4d0c8"/><rect x="5" y="4" width="2" height="1" fill="#000"/><rect x="4" y="5" width="4" height="2" fill="#000"/><rect x="5" y="7" width="2" height="1" fill="#000"/></svg>
<div class="t " style="left:807.0px;top:154.2px;">Peak Search</div>
<svg class="abs" style="left:789px;top:170px" width="13" height="13" shape-rendering="crispEdges"><rect x="0" y="0" width="13" height="13" fill="#fff"/><rect x="0" y="0" width="12" height="1" fill="#808080"/><rect x="0" y="0" width="1" height="12" fill="#808080"/><rect x="1" y="1" width="10" height="1" fill="#404040"/><rect x="1" y="1" width="1" height="10" fill="#404040"/><rect x="1" y="11" width="11" height="1" fill="#d4d0c8"/><rect x="11" y="1" width="1" height="11" fill="#d4d0c8"/><rect x="0" y="12" width="13" height="1" fill="#fff"/><rect x="12" y="0" width="1" height="13" fill="#fff"/><rect x="9" y="3" width="1" height="1" fill="#000"/><rect x="8" y="4" width="1" height="1" fill="#000"/><rect x="9" y="4" width="1" height="1" fill="#000"/><rect x="7" y="5" width="1" height="1" fill="#000"/><rect x="8" y="5" width="1" height="1" fill="#000"/><rect x="9" y="5" width="1" height="1" fill="#000"/><rect x="3" y="5" width="1" height="1" fill="#000"/><rect x="3" y="6" width="1" height="1" fill="#000"/><rect x="4" y="6" width="1" height="1" fill="#000"/><rect x="6" y="6" width="1" height="1" fill="#000"/><rect x="7" y="6" width="1" height="1" fill="#000"/><rect x="8" y="6" width="1" height="1" fill="#000"/><rect x="3" y="7" width="1" height="1" fill="#000"/><rect x="4" y="7" width="1" height="1" fill="#000"/><rect x="5" y="7" width="1" height="1" fill="#000"/><rect x="6" y="7" width="1" height="1" fill="#000"/><rect x="7" y="7" width="1" height="1" fill="#000"/><rect x="4" y="8" width="1" height="1" fill="#000"/><rect x="5" y="8" width="1" height="1" fill="#000"/><rect x="6" y="8" width="1" height="1" fill="#000"/><rect x="5" y="9" width="1" height="1" fill="#000"/></svg>
<div class="t " style="left:807.0px;top:170.2px;">Delta Marker</div>
<div class="abs btn" style="left:788px;top:192px;width:97px;height:22px;"></div>
<div class="t" style="left:788px;width:97px;text-align:center;top:196.7px">Marker to CF</div>
<div class="abs btn" style="left:788px;top:218px;width:97px;height:23px;"></div>
<div class="t" style="left:788px;width:97px;text-align:center;top:223.2px">Auto Ref. Level</div>
<div class="abs grp" style="left:774px;top:263px;width:127px;height:90px;"></div>
<div class="t lbl" style="left:781.5px;top:258.2px;padding:0 2px">Marker B</div>
<svg class="abs" style="left:790px;top:284px" width="12" height="12" shape-rendering="crispEdges"><rect x="3" y="2" width="6" height="8" fill="#fff"/><rect x="2" y="3" width="8" height="6" fill="#fff"/><rect x="4" y="0" width="4" height="1" fill="#808080"/><rect x="2" y="1" width="2" height="1" fill="#808080"/><rect x="8" y="1" width="2" height="1" fill="#808080"/><rect x="1" y="2" width="1" height="2" fill="#808080"/><rect x="0" y="4" width="1" height="4" fill="#808080"/><rect x="1" y="8" width="1" height="2" fill="#808080"/><rect x="4" y="1" width="4" height="1" fill="#404040"/><rect x="2" y="2" width="2" height="1" fill="#404040"/><rect x="8" y="2" width="2" height="1" fill="#404040"/><rect x="2" y="3" width="1" height="1" fill="#404040"/><rect x="1" y="4" width="1" height="4" fill="#404040"/><rect x="2" y="8" width="1" height="1" fill="#404040"/><rect x="4" y="11" width="4" height="1" fill="#fff"/><rect x="2" y="10" width="2" height="1" fill="#fff"/><rect x="8" y="10" width="2" height="1" fill="#fff"/><rect x="10" y="8" width="1" height="2" fill="#fff"/><rect x="11" y="4" width="1" height="4" fill="#fff"/><rect x="10" y="2" width="1" height="2" fill="#fff"/><rect x="4" y="10" width="4" height="1" fill="#d4d0c8"/><rect x="2" y="9" width="2" height="1" fill="#d4d0c8"/><rect x="8" y="9" width="2" height="1" fill="#d4d0c8"/><rect x="9" y="8" width="1" height="1" fill="#d4d0c8"/><rect x="10" y="4" width="1" height="4" fill="#d4d0c8"/><rect x="9" y="3" width="1" height="1" fill="#d4d0c8"/></svg>
<div class="t " style="left:807.0px;top:282.7px;">Marker Off</div>
<svg class="abs" style="left:790px;top:300px" width="12" height="12" shape-rendering="crispEdges"><rect x="3" y="2" width="6" height="8" fill="#fff"/><rect x="2" y="3" width="8" height="6" fill="#fff"/><rect x="4" y="0" width="4" height="1" fill="#808080"/><rect x="2" y="1" width="2" height="1" fill="#808080"/><rect x="8" y="1" width="2" height="1" fill="#808080"/><rect x="1" y="2" width="1" height="2" fill="#808080"/><rect x="0" y="4" width="1" height="4" fill="#808080"/><rect x="1" y="8" width="1" height="2" fill="#808080"/><rect x="4" y="1" width="4" height="1" fill="#404040"/><rect x="2" y="2" width="2" height="1" fill="#404040"/><rect x="8" y="2" width="2" height="1" fill="#404040"/><rect x="2" y="3" width="1" height="1" fill="#404040"/><rect x="1" y="4" width="1" height="4" fill="#404040"/><rect x="2" y="8" width="1" height="1" fill="#404040"/><rect x="4" y="11" width="4" height="1" fill="#fff"/><rect x="2" y="10" width="2" height="1" fill="#fff"/><rect x="8" y="10" width="2" height="1" fill="#fff"/><rect x="10" y="8" width="1" height="2" fill="#fff"/><rect x="11" y="4" width="1" height="4" fill="#fff"/><rect x="10" y="2" width="1" height="2" fill="#fff"/><rect x="4" y="10" width="4" height="1" fill="#d4d0c8"/><rect x="2" y="9" width="2" height="1" fill="#d4d0c8"/><rect x="8" y="9" width="2" height="1" fill="#d4d0c8"/><rect x="9" y="8" width="1" height="1" fill="#d4d0c8"/><rect x="10" y="4" width="1" height="4" fill="#d4d0c8"/><rect x="9" y="3" width="1" height="1" fill="#d4d0c8"/><rect x="5" y="4" width="2" height="1" fill="#000"/><rect x="4" y="5" width="4" height="2" fill="#000"/><rect x="5" y="7" width="2" height="1" fill="#000"/></svg>
<div class="t " style="left:807.0px;top:298.7px;">Marker On</div>
<svg class="abs" style="left:790px;top:316px" width="12" height="12" shape-rendering="crispEdges"><rect x="3" y="2" width="6" height="8" fill="#fff"/><rect x="2" y="3" width="8" height="6" fill="#fff"/><rect x="4" y="0" width="4" height="1" fill="#808080"/><rect x="2" y="1" width="2" height="1" fill="#808080"/><rect x="8" y="1" width="2" height="1" fill="#808080"/><rect x="1" y="2" width="1" height="2" fill="#808080"/><rect x="0" y="4" width="1" height="4" fill="#808080"/><rect x="1" y="8" width="1" height="2" fill="#808080"/><rect x="4" y="1" width="4" height="1" fill="#404040"/><rect x="2" y="2" width="2" height="1" fill="#404040"/><rect x="8" y="2" width="2" height="1" fill="#404040"/><rect x="2" y="3" width="1" height="1" fill="#404040"/><rect x="1" y="4" width="1" height="4" fill="#404040"/><rect x="2" y="8" width="1" height="1" fill="#404040"/><rect x="4" y="11" width="4" height="1" fill="#fff"/><rect x="2" y="10" width="2" height="1" fill="#fff"/><rect x="8" y="10" width="2" height="1" fill="#fff"/><rect x="10" y="8" width="1" height="2" fill="#fff"/><rect x="11" y="4" width="1" height="4" fill="#fff"/><rect x="10" y="2" width="1" height="2" fill="#fff"/><rect x="4" y="10" width="4" height="1" fill="#d4d0c8"/><rect x="2" y="9" width="2" height="1" fill="#d4d0c8"/><rect x="8" y="9" width="2" height="1" fill="#d4d0c8"/><rect x="9" y="8" width="1" height="1" fill="#d4d0c8"/><rect x="10" y="4" width="1" height="4" fill="#d4d0c8"/><rect x="9" y="3" width="1" height="1" fill="#d4d0c8"/></svg>
<div class="t " style="left:807.0px;top:314.7px;">Peak Search</div>
<svg class="abs" style="left:789px;top:331px" width="13" height="13" shape-rendering="crispEdges"><rect x="0" y="0" width="13" height="13" fill="#fff"/><rect x="0" y="0" width="12" height="1" fill="#808080"/><rect x="0" y="0" width="1" height="12" fill="#808080"/><rect x="1" y="1" width="10" height="1" fill="#404040"/><rect x="1" y="1" width="1" height="10" fill="#404040"/><rect x="1" y="11" width="11" height="1" fill="#d4d0c8"/><rect x="11" y="1" width="1" height="11" fill="#d4d0c8"/><rect x="0" y="12" width="13" height="1" fill="#fff"/><rect x="12" y="0" width="1" height="13" fill="#fff"/><rect x="9" y="3" width="1" height="1" fill="#000"/><rect x="8" y="4" width="1" height="1" fill="#000"/><rect x="9" y="4" width="1" height="1" fill="#000"/><rect x="7" y="5" width="1" height="1" fill="#000"/><rect x="8" y="5" width="1" height="1" fill="#000"/><rect x="9" y="5" width="1" height="1" fill="#000"/><rect x="3" y="5" width="1" height="1" fill="#000"/><rect x="3" y="6" width="1" height="1" fill="#000"/><rect x="4" y="6" width="1" height="1" fill="#000"/><rect x="6" y="6" width="1" height="1" fill="#000"/><rect x="7" y="6" width="1" height="1" fill="#000"/><rect x="8" y="6" width="1" height="1" fill="#000"/><rect x="3" y="7" width="1" height="1" fill="#000"/><rect x="4" y="7" width="1" height="1" fill="#000"/><rect x="5" y="7" width="1" height="1" fill="#000"/><rect x="6" y="7" width="1" height="1" fill="#000"/><rect x="7" y="7" width="1" height="1" fill="#000"/><rect x="4" y="8" width="1" height="1" fill="#000"/><rect x="5" y="8" width="1" height="1" fill="#000"/><rect x="6" y="8" width="1" height="1" fill="#000"/><rect x="5" y="9" width="1" height="1" fill="#000"/></svg>
<div class="t " style="left:807.0px;top:331.2px;">Delta Marker</div>
<div class="abs grp" style="left:774px;top:369px;width:127px;height:89px;"></div>
<div class="t lbl" style="left:781.5px;top:363.2px;padding:0 2px">Marker C</div>
<svg class="abs" style="left:790px;top:389px" width="12" height="12" shape-rendering="crispEdges"><rect x="3" y="2" width="6" height="8" fill="#fff"/><rect x="2" y="3" width="8" height="6" fill="#fff"/><rect x="4" y="0" width="4" height="1" fill="#808080"/><rect x="2" y="1" width="2" height="1" fill="#808080"/><rect x="8" y="1" width="2" height="1" fill="#808080"/><rect x="1" y="2" width="1" height="2" fill="#808080"/><rect x="0" y="4" width="1" height="4" fill="#808080"/><rect x="1" y="8" width="1" height="2" fill="#808080"/><rect x="4" y="1" width="4" height="1" fill="#404040"/><rect x="2" y="2" width="2" height="1" fill="#404040"/><rect x="8" y="2" width="2" height="1" fill="#404040"/><rect x="2" y="3" width="1" height="1" fill="#404040"/><rect x="1" y="4" width="1" height="4" fill="#404040"/><rect x="2" y="8" width="1" height="1" fill="#404040"/><rect x="4" y="11" width="4" height="1" fill="#fff"/><rect x="2" y="10" width="2" height="1" fill="#fff"/><rect x="8" y="10" width="2" height="1" fill="#fff"/><rect x="10" y="8" width="1" height="2" fill="#fff"/><rect x="11" y="4" width="1" height="4" fill="#fff"/><rect x="10" y="2" width="1" height="2" fill="#fff"/><rect x="4" y="10" width="4" height="1" fill="#d4d0c8"/><rect x="2" y="9" width="2" height="1" fill="#d4d0c8"/><rect x="8" y="9" width="2" height="1" fill="#d4d0c8"/><rect x="9" y="8" width="1" height="1" fill="#d4d0c8"/><rect x="10" y="4" width="1" height="4" fill="#d4d0c8"/><rect x="9" y="3" width="1" height="1" fill="#d4d0c8"/><rect x="5" y="4" width="2" height="1" fill="#000"/><rect x="4" y="5" width="4" height="2" fill="#000"/><rect x="5" y="7" width="2" height="1" fill="#000"/></svg>
<div class="t " style="left:807.0px;top:388.2px;">Marker Off</div>
<svg class="abs" style="left:790px;top:406px" width="12" height="12" shape-rendering="crispEdges"><rect x="3" y="2" width="6" height="8" fill="#fff"/><rect x="2" y="3" width="8" height="6" fill="#fff"/><rect x="4" y="0" width="4" height="1" fill="#808080"/><rect x="2" y="1" width="2" height="1" fill="#808080"/><rect x="8" y="1" width="2" height="1" fill="#808080"/><rect x="1" y="2" width="1" height="2" fill="#808080"/><rect x="0" y="4" width="1" height="4" fill="#808080"/><rect x="1" y="8" width="1" height="2" fill="#808080"/><rect x="4" y="1" width="4" height="1" fill="#404040"/><rect x="2" y="2" width="2" height="1" fill="#404040"/><rect x="8" y="2" width="2" height="1" fill="#404040"/><rect x="2" y="3" width="1" height="1" fill="#404040"/><rect x="1" y="4" width="1" height="4" fill="#404040"/><rect x="2" y="8" width="1" height="1" fill="#404040"/><rect x="4" y="11" width="4" height="1" fill="#fff"/><rect x="2" y="10" width="2" height="1" fill="#fff"/><rect x="8" y="10" width="2" height="1" fill="#fff"/><rect x="10" y="8" width="1" height="2" fill="#fff"/><rect x="11" y="4" width="1" height="4" fill="#fff"/><rect x="10" y="2" width="1" height="2" fill="#fff"/><rect x="4" y="10" width="4" height="1" fill="#d4d0c8"/><rect x="2" y="9" width="2" height="1" fill="#d4d0c8"/><rect x="8" y="9" width="2" height="1" fill="#d4d0c8"/><rect x="9" y="8" width="1" height="1" fill="#d4d0c8"/><rect x="10" y="4" width="1" height="4" fill="#d4d0c8"/><rect x="9" y="3" width="1" height="1" fill="#d4d0c8"/></svg>
<div class="t " style="left:807.0px;top:404.7px;">Marker On</div>
<svg class="abs" style="left:790px;top:422px" width="12" height="12" shape-rendering="crispEdges"><rect x="3" y="2" width="6" height="8" fill="#fff"/><rect x="2" y="3" width="8" height="6" fill="#fff"/><rect x="4" y="0" width="4" height="1" fill="#808080"/><rect x="2" y="1" width="2" height="1" fill="#808080"/><rect x="8" y="1" width="2" height="1" fill="#808080"/><rect x="1" y="2" width="1" height="2" fill="#808080"/><rect x="0" y="4" width="1" height="4" fill="#808080"/><rect x="1" y="8" width="1" height="2" fill="#808080"/><rect x="4" y="1" width="4" height="1" fill="#404040"/><rect x="2" y="2" width="2" height="1" fill="#404040"/><rect x="8" y="2" width="2" height="1" fill="#404040"/><rect x="2" y="3" width="1" height="1" fill="#404040"/><rect x="1" y="4" width="1" height="4" fill="#404040"/><rect x="2" y="8" width="1" height="1" fill="#404040"/><rect x="4" y="11" width="4" height="1" fill="#fff"/><rect x="2" y="10" width="2" height="1" fill="#fff"/><rect x="8" y="10" width="2" height="1" fill="#fff"/><rect x="10" y="8" width="1" height="2" fill="#fff"/><rect x="11" y="4" width="1" height="4" fill="#fff"/><rect x="10" y="2" width="1" height="2" fill="#fff"/><rect x="4" y="10" width="4" height="1" fill="#d4d0c8"/><rect x="2" y="9" width="2" height="1" fill="#d4d0c8"/><rect x="8" y="9" width="2" height="1" fill="#d4d0c8"/><rect x="9" y="8" width="1" height="1" fill="#d4d0c8"/><rect x="10" y="4" width="1" height="4" fill="#d4d0c8"/><rect x="9" y="3" width="1" height="1" fill="#d4d0c8"/></svg>
<div class="t " style="left:807.0px;top:420.7px;">Peak Search</div>
<svg class="abs" style="left:789px;top:437px" width="13" height="13" shape-rendering="crispEdges"><rect x="0" y="0" width="13" height="13" fill="#fff"/><rect x="0" y="0" width="12" height="1" fill="#808080"/><rect x="0" y="0" width="1" height="12" fill="#808080"/><rect x="1" y="1" width="10" height="1" fill="#404040"/><rect x="1" y="1" width="1" height="10" fill="#404040"/><rect x="1" y="11" width="11" height="1" fill="#d4d0c8"/><rect x="11" y="1" width="1" height="11" fill="#d4d0c8"/><rect x="0" y="12" width="13" height="1" fill="#fff"/><rect x="12" y="0" width="1" height="13" fill="#fff"/></svg>
<div class="t " style="left:807.0px;top:437.2px;">Delta Marker</div>
<svg class="abs" style="left:789px;top:469px" width="13" height="13" shape-rendering="crispEdges"><rect x="0" y="0" width="13" height="13" fill="#fff"/><rect x="0" y="0" width="12" height="1" fill="#808080"/><rect x="0" y="0" width="1" height="12" fill="#808080"/><rect x="1" y="1" width="10" height="1" fill="#404040"/><rect x="1" y="1" width="1" height="10" fill="#404040"/><rect x="1" y="11" width="11" height="1" fill="#d4d0c8"/><rect x="11" y="1" width="1" height="11" fill="#d4d0c8"/><rect x="0" y="12" width="13" height="1" fill="#fff"/><rect x="12" y="0" width="1" height="13" fill="#fff"/></svg>
<div class="t " style="left:807.0px;top:469.2px;">Display Line</div>
<div class="abs btn" style="left:634px;top:580px;width:96px;height:23px;"></div>
<div class="t" style="left:634px;width:96px;text-align:center;top:585.2px">Measurement&gt;&gt;</div>
<div class="abs sunk" style="left:734px;top:581px;width:174px;height:22px;background:#d4d0c8"></div>
<div class="t " style="left:785.0px;top:583.2px;">Spectral Meas.</div>
<svg class="abs" style="left:635px;top:608px" width="12" height="12" shape-rendering="crispEdges"><rect x="3" y="2" width="6" height="8" fill="#fff"/><rect x="2" y="3" width="8" height="6" fill="#fff"/><rect x="4" y="0" width="4" height="1" fill="#808080"/><rect x="2" y="1" width="2" height="1" fill="#808080"/><rect x="8" y="1" width="2" height="1" fill="#808080"/><rect x="1" y="2" width="1" height="2" fill="#808080"/><rect x="0" y="4" width="1" height="4" fill="#808080"/><rect x="1" y="8" width="1" height="2" fill="#808080"/><rect x="4" y="1" width="4" height="1" fill="#404040"/><rect x="2" y="2" width="2" height="1" fill="#404040"/><rect x="8" y="2" width="2" height="1" fill="#404040"/><rect x="2" y="3" width="1" height="1" fill="#404040"/><rect x="1" y="4" width="1" height="4" fill="#404040"/><rect x="2" y="8" width="1" height="1" fill="#404040"/><rect x="4" y="11" width="4" height="1" fill="#fff"/><rect x="2" y="10" width="2" height="1" fill="#fff"/><rect x="8" y="10" width="2" height="1" fill="#fff"/><rect x="10" y="8" width="1" height="2" fill="#fff"/><rect x="11" y="4" width="1" height="4" fill="#fff"/><rect x="10" y="2" width="1" height="2" fill="#fff"/><rect x="4" y="10" width="4" height="1" fill="#d4d0c8"/><rect x="2" y="9" width="2" height="1" fill="#d4d0c8"/><rect x="8" y="9" width="2" height="1" fill="#d4d0c8"/><rect x="9" y="8" width="1" height="1" fill="#d4d0c8"/><rect x="10" y="4" width="1" height="4" fill="#d4d0c8"/><rect x="9" y="3" width="1" height="1" fill="#d4d0c8"/></svg>
<div class="t " style="left:652.5px;top:608.2px;">Manual Meas</div>
<svg class="abs" style="left:729px;top:608px" width="12" height="12" shape-rendering="crispEdges"><rect x="3" y="2" width="6" height="8" fill="#fff"/><rect x="2" y="3" width="8" height="6" fill="#fff"/><rect x="4" y="0" width="4" height="1" fill="#808080"/><rect x="2" y="1" width="2" height="1" fill="#808080"/><rect x="8" y="1" width="2" height="1" fill="#808080"/><rect x="1" y="2" width="1" height="2" fill="#808080"/><rect x="0" y="4" width="1" height="4" fill="#808080"/><rect x="1" y="8" width="1" height="2" fill="#808080"/><rect x="4" y="1" width="4" height="1" fill="#404040"/><rect x="2" y="2" width="2" height="1" fill="#404040"/><rect x="8" y="2" width="2" height="1" fill="#404040"/><rect x="2" y="3" width="1" height="1" fill="#404040"/><rect x="1" y="4" width="1" height="4" fill="#404040"/><rect x="2" y="8" width="1" height="1" fill="#404040"/><rect x="4" y="11" width="4" height="1" fill="#fff"/><rect x="2" y="10" width="2" height="1" fill="#fff"/><rect x="8" y="10" width="2" height="1" fill="#fff"/><rect x="10" y="8" width="1" height="2" fill="#fff"/><rect x="11" y="4" width="1" height="4" fill="#fff"/><rect x="10" y="2" width="1" height="2" fill="#fff"/><rect x="4" y="10" width="4" height="1" fill="#d4d0c8"/><rect x="2" y="9" width="2" height="1" fill="#d4d0c8"/><rect x="8" y="9" width="2" height="1" fill="#d4d0c8"/><rect x="9" y="8" width="1" height="1" fill="#d4d0c8"/><rect x="10" y="4" width="1" height="4" fill="#d4d0c8"/><rect x="9" y="3" width="1" height="1" fill="#d4d0c8"/></svg>
<div class="t " style="left:747.0px;top:608.2px;">Instrument Ctrl</div>
<svg class="abs" style="left:825px;top:608px" width="12" height="12" shape-rendering="crispEdges"><rect x="3" y="2" width="6" height="8" fill="#fff"/><rect x="2" y="3" width="8" height="6" fill="#fff"/><rect x="4" y="0" width="4" height="1" fill="#808080"/><rect x="2" y="1" width="2" height="1" fill="#808080"/><rect x="8" y="1" width="2" height="1" fill="#808080"/><rect x="1" y="2" width="1" height="2" fill="#808080"/><rect x="0" y="4" width="1" height="4" fill="#808080"/><rect x="1" y="8" width="1" height="2" fill="#808080"/><rect x="4" y="1" width="4" height="1" fill="#404040"/><rect x="2" y="2" width="2" height="1" fill="#404040"/><rect x="8" y="2" width="2" height="1" fill="#404040"/><rect x="2" y="3" width="1" height="1" fill="#404040"/><rect x="1" y="4" width="1" height="4" fill="#404040"/><rect x="2" y="8" width="1" height="1" fill="#404040"/><rect x="4" y="11" width="4" height="1" fill="#fff"/><rect x="2" y="10" width="2" height="1" fill="#fff"/><rect x="8" y="10" width="2" height="1" fill="#fff"/><rect x="10" y="8" width="1" height="2" fill="#fff"/><rect x="11" y="4" width="1" height="4" fill="#fff"/><rect x="10" y="2" width="1" height="2" fill="#fff"/><rect x="4" y="10" width="4" height="1" fill="#d4d0c8"/><rect x="2" y="9" width="2" height="1" fill="#d4d0c8"/><rect x="8" y="9" width="2" height="1" fill="#d4d0c8"/><rect x="9" y="8" width="1" height="1" fill="#d4d0c8"/><rect x="10" y="4" width="1" height="4" fill="#d4d0c8"/><rect x="9" y="3" width="1" height="1" fill="#d4d0c8"/><rect x="5" y="4" width="2" height="1" fill="#000"/><rect x="4" y="5" width="4" height="2" fill="#000"/><rect x="5" y="7" width="2" height="1" fill="#000"/></svg>
<div class="t " style="left:841.5px;top:608.2px;">Xpol</div>
<div class="abs btn" style="left:630px;top:631px;width:63px;height:24px;"></div>
<div class="t" style="left:630px;width:63px;text-align:center;top:635.2px">Single</div>
<div class="abs btn" style="left:701px;top:631px;width:63px;height:24px;"></div>
<div class="t" style="left:701px;width:63px;text-align:center;top:635.2px">Continuous</div>
<div class="abs btn" style="left:772px;top:631px;width:63px;height:24px;"></div>
<div class="t" style="left:772px;width:63px;text-align:center;top:636.2px;color:#fff">Abort</div>
<div class="t" style="left:771px;width:63px;text-align:center;top:635.2px;color:#808080">Abort</div>
<div class="abs btn" style="left:843px;top:631px;width:63px;height:24px;"></div>
<div class="t" style="left:843px;width:63px;text-align:center;top:636.2px;color:#fff">Save</div>
<div class="t" style="left:842px;width:63px;text-align:center;top:635.2px;color:#808080">Save</div>
<svg class="abs" style="left:649px;top:433px" width="16" height="24" shape-rendering="auto"><path d="M1.5 1.5V17.5L5.5 13.5L8 20.5L11 19.5L8.5 12.5H13Z" fill="#fff" stroke="#000" stroke-width="1"/></svg>
</body></html>
